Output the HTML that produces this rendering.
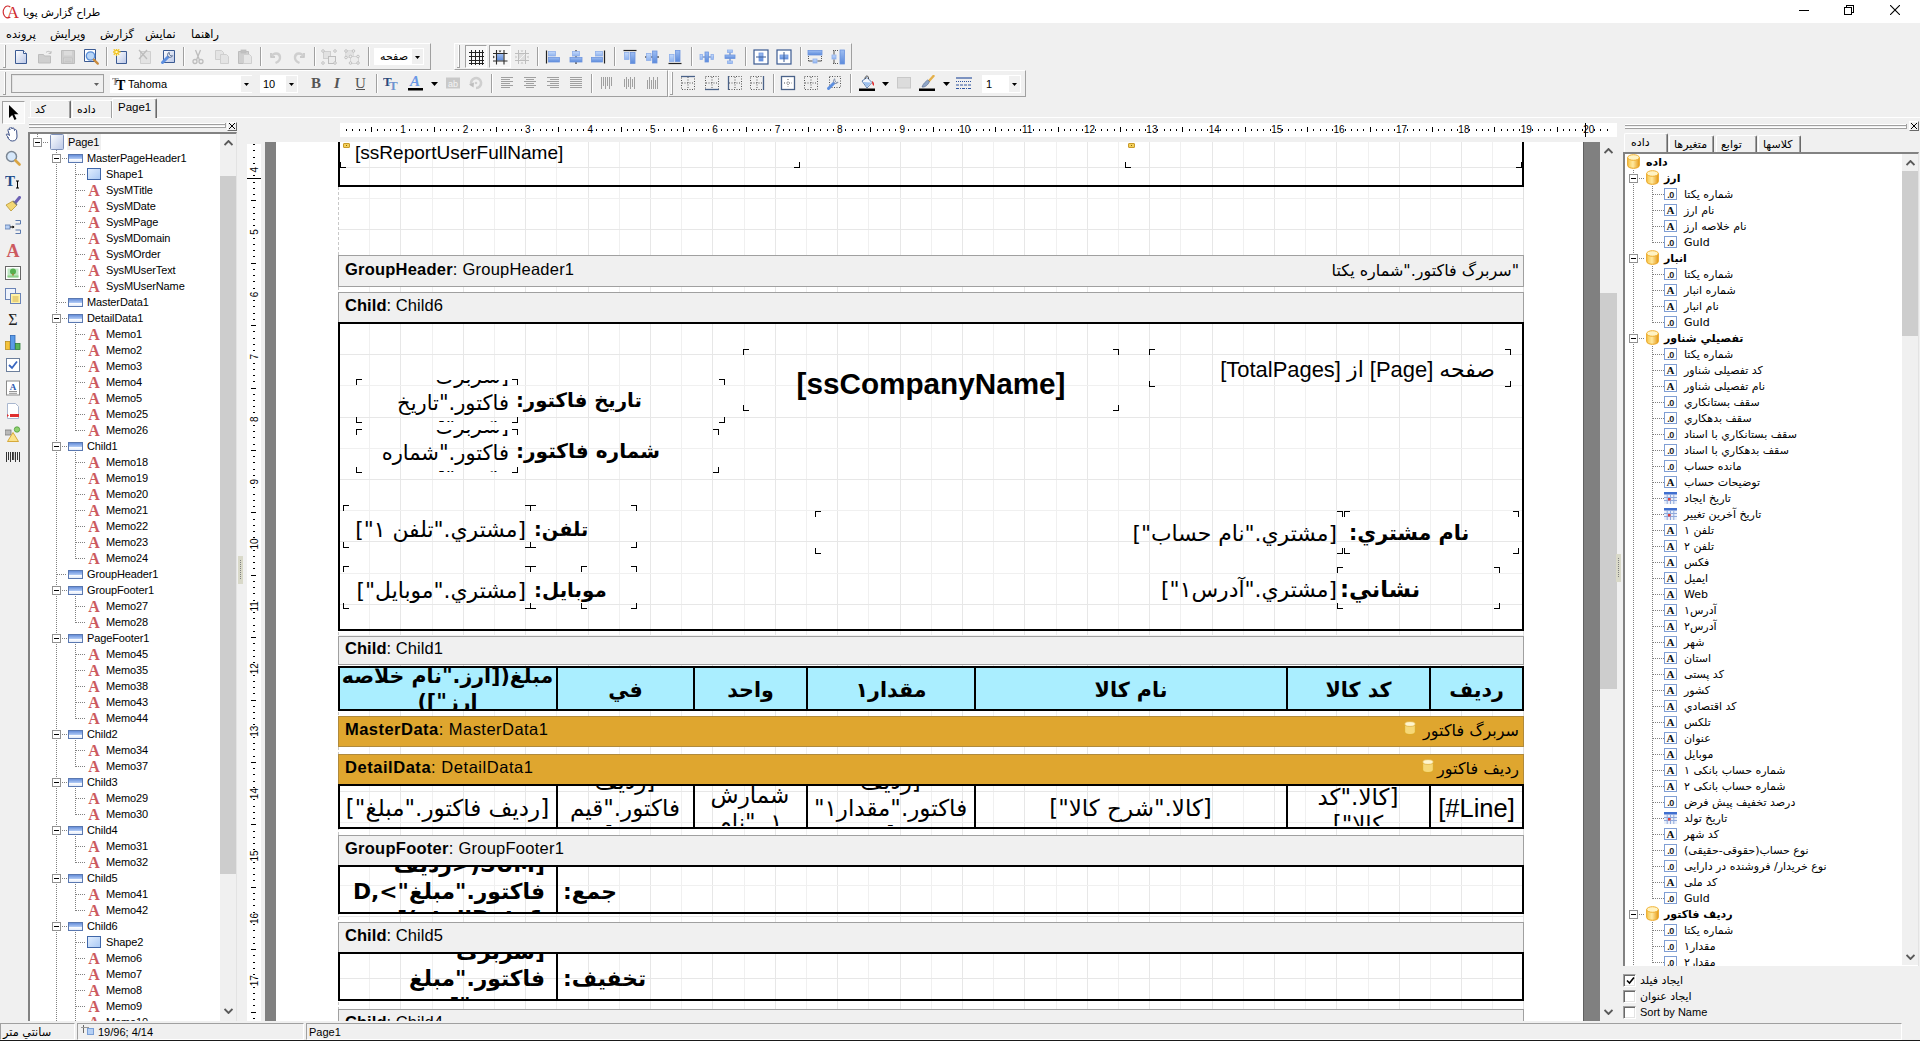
<!DOCTYPE html><html lang="fa"><head><meta charset="utf-8"><title>FastReport designer</title><style>
html,body{margin:0;padding:0}
body{width:1920px;height:1041px;position:relative;overflow:hidden;background:#f0f0f0;font-family:'Liberation Sans','DejaVu Sans',sans-serif;font-size:11px;color:#000}
div,svg,span{position:absolute;box-sizing:border-box}
span.i{position:static}
b{font-weight:bold}
.t{white-space:nowrap;line-height:1}
.ar{font-family:'DejaVu Sans','Liberation Sans',sans-serif}
.ti{white-space:nowrap;line-height:16px;height:16px;font-size:11px}
.dotv{width:1px;background-image:linear-gradient(#808080 50%,transparent 50%);background-size:1px 2px}
.doth{height:1px;background-image:linear-gradient(90deg,#808080 50%,transparent 50%);background-size:2px 1px}
.pm{width:9px;height:9px;border:1px solid #919191;background:#fff}
.pm:after{content:"";position:absolute;left:1px;top:3px;width:5px;height:1px;background:#000}
.bandh{background:#f0f0f0;border:1px solid #a0a0a0;font-size:16px;letter-spacing:.45px;line-height:1;white-space:nowrap}
.bandh.or{background:#dfa62f;border-color:#b08a3c}
.memo{overflow:hidden;white-space:nowrap}
.c{border:0 solid #000}
.c.tl{border-left-width:1px;border-top-width:1px}
.c.tr{border-right-width:1px;border-top-width:1px}
.c.bl{border-left-width:1px;border-bottom-width:1px}
.c.br{border-right-width:1px;border-bottom-width:1px}
</style></head><body>
<svg width="0" height="0" style="left:0;top:0"><defs><linearGradient id="gb" x1="0" y1="0" x2="1" y2="1"><stop offset="0" stop-color="#ffffff"/><stop offset="1" stop-color="#b9c6e6"/></linearGradient><linearGradient id="gl" x1="0" y1="0" x2="0" y2="1"><stop offset="0" stop-color="#c3d9fb"/><stop offset="1" stop-color="#8fb3ee"/></linearGradient><linearGradient id="gd" x1="0" y1="0" x2="0" y2="1"><stop offset="0" stop-color="#9dbdf2"/><stop offset="1" stop-color="#5c8bdb"/></linearGradient><linearGradient id="gy" x1="0" y1="0" x2="1" y2="0"><stop offset="0" stop-color="#f7c64a"/><stop offset=".45" stop-color="#ffe9a0"/><stop offset="1" stop-color="#e59a17"/></linearGradient><linearGradient id="gband" x1="0" y1="0" x2="0" y2="1"><stop offset="0" stop-color="#5c86d6"/><stop offset=".5" stop-color="#a9c4f2"/><stop offset=".55" stop-color="#ffffff"/><stop offset="1" stop-color="#dfe8f8"/></linearGradient><linearGradient id="gshape" x1="0" y1="0" x2="1" y2="1"><stop offset="0" stop-color="#e4f0ff"/><stop offset="1" stop-color="#a8c8f4"/></linearGradient></defs></svg>
<div style="left:261px;top:142px;width:1339px;height:879px;background:#f0f0f0"></div><div style="left:265px;top:142px;width:11px;height:879px;background:#808080"></div><div style="left:276px;top:142px;width:1307px;height:879px;background:#fff"></div><div style="left:1583px;top:142px;width:17px;height:879px;background:#808080;border-left:1px solid #606060"></div><svg style="left:338px;top:142px" width="1186" height="879" viewBox="0 0 1186 879"><rect x="31" y="0" width="1" height="879" fill="#f0f0f0"/><rect x="62" y="0" width="1" height="879" fill="#e7e7e7"/><rect x="94" y="0" width="1" height="879" fill="#f0f0f0"/><rect x="125" y="0" width="1" height="879" fill="#e7e7e7"/><rect x="156" y="0" width="1" height="879" fill="#f0f0f0"/><rect x="187" y="0" width="1" height="879" fill="#e7e7e7"/><rect x="218" y="0" width="1" height="879" fill="#f0f0f0"/><rect x="250" y="0" width="1" height="879" fill="#e7e7e7"/><rect x="281" y="0" width="1" height="879" fill="#f0f0f0"/><rect x="312" y="0" width="1" height="879" fill="#e7e7e7"/><rect x="343" y="0" width="1" height="879" fill="#f0f0f0"/><rect x="374" y="0" width="1" height="879" fill="#e7e7e7"/><rect x="406" y="0" width="1" height="879" fill="#f0f0f0"/><rect x="437" y="0" width="1" height="879" fill="#e7e7e7"/><rect x="468" y="0" width="1" height="879" fill="#f0f0f0"/><rect x="499" y="0" width="1" height="879" fill="#e7e7e7"/><rect x="530" y="0" width="1" height="879" fill="#f0f0f0"/><rect x="562" y="0" width="1" height="879" fill="#e7e7e7"/><rect x="593" y="0" width="1" height="879" fill="#f0f0f0"/><rect x="624" y="0" width="1" height="879" fill="#e7e7e7"/><rect x="655" y="0" width="1" height="879" fill="#f0f0f0"/><rect x="686" y="0" width="1" height="879" fill="#e7e7e7"/><rect x="718" y="0" width="1" height="879" fill="#f0f0f0"/><rect x="749" y="0" width="1" height="879" fill="#e7e7e7"/><rect x="780" y="0" width="1" height="879" fill="#f0f0f0"/><rect x="811" y="0" width="1" height="879" fill="#e7e7e7"/><rect x="842" y="0" width="1" height="879" fill="#f0f0f0"/><rect x="874" y="0" width="1" height="879" fill="#e7e7e7"/><rect x="905" y="0" width="1" height="879" fill="#f0f0f0"/><rect x="936" y="0" width="1" height="879" fill="#e7e7e7"/><rect x="967" y="0" width="1" height="879" fill="#f0f0f0"/><rect x="998" y="0" width="1" height="879" fill="#e7e7e7"/><rect x="1030" y="0" width="1" height="879" fill="#f0f0f0"/><rect x="1061" y="0" width="1" height="879" fill="#e7e7e7"/><rect x="1092" y="0" width="1" height="879" fill="#f0f0f0"/><rect x="1123" y="0" width="1" height="879" fill="#e7e7e7"/><rect x="1154" y="0" width="1" height="879" fill="#f0f0f0"/><rect x="0" y="25" width="1186" height="1" fill="#e7e7e7"/><rect x="0" y="56" width="1186" height="1" fill="#f0f0f0"/><rect x="0" y="87" width="1186" height="1" fill="#e7e7e7"/><rect x="0" y="119" width="1186" height="1" fill="#f0f0f0"/><rect x="0" y="150" width="1186" height="1" fill="#e7e7e7"/><rect x="0" y="181" width="1186" height="1" fill="#f0f0f0"/><rect x="0" y="212" width="1186" height="1" fill="#e7e7e7"/><rect x="0" y="243" width="1186" height="1" fill="#f0f0f0"/><rect x="0" y="275" width="1186" height="1" fill="#e7e7e7"/><rect x="0" y="306" width="1186" height="1" fill="#f0f0f0"/><rect x="0" y="337" width="1186" height="1" fill="#e7e7e7"/><rect x="0" y="368" width="1186" height="1" fill="#f0f0f0"/><rect x="0" y="399" width="1186" height="1" fill="#e7e7e7"/><rect x="0" y="431" width="1186" height="1" fill="#f0f0f0"/><rect x="0" y="462" width="1186" height="1" fill="#e7e7e7"/><rect x="0" y="493" width="1186" height="1" fill="#f0f0f0"/><rect x="0" y="524" width="1186" height="1" fill="#e7e7e7"/><rect x="0" y="555" width="1186" height="1" fill="#f0f0f0"/><rect x="0" y="587" width="1186" height="1" fill="#e7e7e7"/><rect x="0" y="618" width="1186" height="1" fill="#f0f0f0"/><rect x="0" y="649" width="1186" height="1" fill="#e7e7e7"/><rect x="0" y="680" width="1186" height="1" fill="#f0f0f0"/><rect x="0" y="711" width="1186" height="1" fill="#e7e7e7"/><rect x="0" y="743" width="1186" height="1" fill="#f0f0f0"/><rect x="0" y="774" width="1186" height="1" fill="#e7e7e7"/><rect x="0" y="805" width="1186" height="1" fill="#f0f0f0"/><rect x="0" y="836" width="1186" height="1" fill="#e7e7e7"/><rect x="0" y="867" width="1186" height="1" fill="#f0f0f0"/></svg><div style="left:338px;top:187px;width:1px;height:835px;background-image:linear-gradient(#c8c8c8 60%,transparent 60%);background-size:1px 5px"></div><div style="left:1523px;top:187px;width:1px;height:835px;background:#e0e0e0"></div><div style="left:338px;top:142px;width:1186px;height:45px;border:2px solid #000;border-top:0"></div><div style="left:343px;top:143px;width:7px;height:5px;background:#f3cf5a;border:1px solid #c89a2a;border-radius:1px"></div><div style="left:346px;top:145px;width:1px;height:1px;background:#8a6a10"></div><div style="left:1128px;top:143px;width:7px;height:5px;background:#f3cf5a;border:1px solid #c89a2a;border-radius:1px"></div><div style="left:1131px;top:145px;width:1px;height:1px;background:#8a6a10"></div><div class="c bl" style="left:340px;top:162px;width:6px;height:6px;"></div><div class="c br" style="left:794px;top:162px;width:6px;height:6px;"></div><div class="c bl" style="left:1125px;top:162px;width:6px;height:6px;"></div><div class="c br" style="left:1516px;top:162px;width:6px;height:6px;"></div><div class="t" style="left:355px;top:142px;font-size:19.05px;line-height:22px">[ssReportUserFullName]</div><div class="bandh" style="left:338px;top:255px;width:1186px;height:32px;"><div class="t" style="left:6px;top:5px;font-size:16.500px;letter-spacing:0.22px"><b>GroupHeader</b>: GroupHeader1</div><div class="t ar" style="direction:rtl;right:4px;top:6px;font-size:16px;letter-spacing:0;line-height:18px">"سربرگ فاكتور."شماره يكتا</div></div><div class="bandh" style="left:338px;top:292px;width:1186px;height:31px;"><div class="t" style="left:6px;top:4px;font-size:16.500px;letter-spacing:0.06px"><b>Child</b>: Child6</div></div><div style="left:338px;top:322px;width:1186px;height:309px;border:2px solid #000"></div><div class="c tl" style="left:743px;top:349px;width:6px;height:6px;"></div><div class="c tr" style="left:1113px;top:349px;width:6px;height:6px;"></div><div class="c bl" style="left:743px;top:405px;width:6px;height:6px;"></div><div class="c br" style="left:1113px;top:405px;width:6px;height:6px;"></div><div style="left:743px;top:353px;width:376px;height:62px;font-family:'Liberation Sans','DejaVu Sans',sans-serif;font-size:29.7px;line-height:62px;text-align:center;padding:0 0px;white-space:nowrap;overflow:hidden;font-weight:bold;">[ssCompanyName]</div><div class="c tl" style="left:1149px;top:349px;width:6px;height:6px;"></div><div class="c tr" style="left:1505px;top:349px;width:6px;height:6px;"></div><div class="c bl" style="left:1149px;top:381px;width:6px;height:6px;"></div><div class="c br" style="left:1505px;top:381px;width:6px;height:6px;"></div><div style="left:1149px;top:351px;width:362px;height:37px;font-family:'Liberation Sans','DejaVu Sans',sans-serif;font-size:21.95px;line-height:37px;text-align:right;padding:0 16px;white-space:nowrap;overflow:hidden;direction:rtl;">صفحه [Page] از [TotalPages]</div><div class="c tl" style="left:356px;top:379px;width:6px;height:6px;"></div><div class="c tr" style="left:512px;top:379px;width:6px;height:6px;"></div><div class="c bl" style="left:356px;top:417px;width:6px;height:6px;"></div><div class="c br" style="left:512px;top:417px;width:6px;height:6px;"></div><div class="c tr" style="left:719px;top:379px;width:6px;height:6px;"></div><div class="c br" style="left:719px;top:417px;width:6px;height:6px;"></div><div style="left:357px;top:380px;width:160px;height:42px;overflow:hidden"><div style="left:8px;top:-17.5px;width:144px;font-family:'DejaVu Sans','Liberation Sans',sans-serif;font-size:21px;line-height:27px;text-align:right;direction:rtl;white-space:nowrap;">[سربرگ<br>فاكتور."تاريخ<br>فاكتور"]</div></div><div style="left:514px;top:379px;width:211px;height:44px;font-family:'DejaVu Sans','Liberation Sans',sans-serif;font-size:19.71px;line-height:44px;text-align:left;padding:0 2px;white-space:nowrap;overflow:hidden;font-weight:bold;direction:rtl;">تاريخ فاكتور:</div><div class="c tl" style="left:356px;top:429px;width:6px;height:6px;"></div><div class="c tr" style="left:512px;top:429px;width:6px;height:6px;"></div><div class="c bl" style="left:356px;top:467px;width:6px;height:6px;"></div><div class="c br" style="left:512px;top:467px;width:6px;height:6px;"></div><div class="c tr" style="left:713px;top:429px;width:6px;height:6px;"></div><div class="c br" style="left:713px;top:467px;width:6px;height:6px;"></div><div style="left:357px;top:430px;width:160px;height:42px;overflow:hidden"><div style="left:8px;top:-17.5px;width:144px;font-family:'DejaVu Sans','Liberation Sans',sans-serif;font-size:21px;line-height:27px;text-align:right;direction:rtl;white-space:nowrap;">[سربرگ<br>فاكتور."شماره<br>فاكتور"]</div></div><div style="left:514px;top:429px;width:205px;height:44px;font-family:'DejaVu Sans','Liberation Sans',sans-serif;font-size:20.09px;line-height:44px;text-align:left;padding:0 2px;white-space:nowrap;overflow:hidden;font-weight:bold;direction:rtl;">شماره فاكتور:</div><div class="c tl" style="left:343px;top:505px;width:6px;height:6px;"></div><div class="c tr" style="left:525px;top:505px;width:6px;height:6px;"></div><div class="c bl" style="left:343px;top:542px;width:6px;height:6px;"></div><div class="c br" style="left:525px;top:542px;width:6px;height:6px;"></div><div class="c tl" style="left:530px;top:505px;width:6px;height:6px;"></div><div class="c tr" style="left:631px;top:505px;width:6px;height:6px;"></div><div class="c bl" style="left:530px;top:542px;width:6px;height:6px;"></div><div class="c br" style="left:631px;top:542px;width:6px;height:6px;"></div><div style="left:343px;top:508px;width:187px;height:43px;font-family:'DejaVu Sans','Liberation Sans',sans-serif;font-size:21.86px;line-height:43px;text-align:right;padding:0 4px;white-space:nowrap;overflow:hidden;direction:rtl;">[مشتري."تلفن ۱"]</div><div style="left:530px;top:508px;width:107px;height:43px;font-family:'DejaVu Sans','Liberation Sans',sans-serif;font-size:19.37px;line-height:43px;text-align:left;padding:0 4px;white-space:nowrap;overflow:hidden;font-weight:bold;direction:rtl;">تلفن:</div><div class="c tl" style="left:343px;top:566px;width:6px;height:6px;"></div><div class="c tr" style="left:525px;top:566px;width:6px;height:6px;"></div><div class="c bl" style="left:343px;top:603px;width:6px;height:6px;"></div><div class="c br" style="left:525px;top:603px;width:6px;height:6px;"></div><div class="c tl" style="left:530px;top:566px;width:6px;height:6px;"></div><div class="c tr" style="left:631px;top:566px;width:6px;height:6px;"></div><div class="c bl" style="left:530px;top:603px;width:6px;height:6px;"></div><div class="c br" style="left:631px;top:603px;width:6px;height:6px;"></div><div style="left:343px;top:569px;width:187px;height:43px;font-family:'DejaVu Sans','Liberation Sans',sans-serif;font-size:21.86px;line-height:43px;text-align:right;padding:0 4px;white-space:nowrap;overflow:hidden;direction:rtl;">[مشتري."موبايل"]</div><div style="left:530px;top:569px;width:107px;height:43px;font-family:'DejaVu Sans','Liberation Sans',sans-serif;font-size:19.84px;line-height:43px;text-align:left;padding:0 4px;white-space:nowrap;overflow:hidden;font-weight:bold;direction:rtl;">موبايل:</div><div class="c tl" style="left:581px;top:566px;width:6px;height:6px;"></div><div class="c bl" style="left:581px;top:603px;width:6px;height:6px;"></div><div class="c tl" style="left:815px;top:511px;width:6px;height:6px;"></div><div class="c bl" style="left:815px;top:548px;width:6px;height:6px;"></div><div class="c tr" style="left:1337px;top:511px;width:6px;height:6px;"></div><div class="c br" style="left:1337px;top:548px;width:6px;height:6px;"></div><div class="c tl" style="left:1344px;top:511px;width:6px;height:6px;"></div><div class="c tr" style="left:1513px;top:511px;width:6px;height:6px;"></div><div class="c bl" style="left:1344px;top:548px;width:6px;height:6px;"></div><div class="c br" style="left:1513px;top:548px;width:6px;height:6px;"></div><div style="left:815px;top:512px;width:526px;height:43px;font-family:'DejaVu Sans','Liberation Sans',sans-serif;font-size:21.86px;line-height:43px;text-align:right;padding:0 4px;white-space:nowrap;overflow:hidden;direction:rtl;">[مشتري."نام حساب"]</div><div style="left:1343px;top:512px;width:176px;height:43px;font-family:'DejaVu Sans','Liberation Sans',sans-serif;font-size:20.7px;line-height:43px;text-align:left;padding:0 6px;white-space:nowrap;overflow:hidden;font-weight:bold;direction:rtl;">نام مشتري:</div><div class="c tl" style="left:1337px;top:567px;width:6px;height:6px;"></div><div class="c tr" style="left:1494px;top:567px;width:6px;height:6px;"></div><div class="c bl" style="left:1337px;top:603px;width:6px;height:6px;"></div><div class="c br" style="left:1494px;top:603px;width:6px;height:6px;"></div><div class="c tl" style="left:1337px;top:567px;width:6px;height:6px;"></div><div class="c bl" style="left:1337px;top:603px;width:6px;height:6px;"></div><div style="left:900px;top:568px;width:437px;height:43px;font-family:'DejaVu Sans','Liberation Sans',sans-serif;font-size:21.86px;line-height:43px;text-align:right;padding:0 0px;white-space:nowrap;overflow:hidden;direction:rtl;">[مشتري."آدرس۱"]</div><div style="left:1337px;top:568px;width:163px;height:43px;font-family:'DejaVu Sans','Liberation Sans',sans-serif;font-size:22.58px;line-height:43px;text-align:left;padding:0 3px;white-space:nowrap;overflow:hidden;font-weight:bold;direction:rtl;">نشاني:</div><div class="bandh" style="left:338px;top:636px;width:1186px;height:29px;"><div class="t" style="left:6px;top:3px;font-size:16.500px;letter-spacing:0.06px"><b>Child</b>: Child1</div></div><div style="left:338px;top:666px;width:220px;height:45px;background:#aaeeff;border:2px solid #000"></div><div style="left:556px;top:666px;width:139px;height:45px;background:#aaeeff;border:2px solid #000"></div><div style="left:556px;top:668px;width:139px;height:45px;font-family:'DejaVu Sans','Liberation Sans',sans-serif;font-size:20.6px;line-height:45px;text-align:center;padding:0 0px;white-space:nowrap;overflow:hidden;font-weight:bold;direction:rtl;">في</div><div style="left:693px;top:666px;width:115px;height:45px;background:#aaeeff;border:2px solid #000"></div><div style="left:693px;top:668px;width:115px;height:45px;font-family:'DejaVu Sans','Liberation Sans',sans-serif;font-size:20.6px;line-height:45px;text-align:center;padding:0 0px;white-space:nowrap;overflow:hidden;font-weight:bold;direction:rtl;">واحد</div><div style="left:806px;top:666px;width:170px;height:45px;background:#aaeeff;border:2px solid #000"></div><div style="left:806px;top:668px;width:170px;height:45px;font-family:'DejaVu Sans','Liberation Sans',sans-serif;font-size:20.6px;line-height:45px;text-align:center;padding:0 0px;white-space:nowrap;overflow:hidden;font-weight:bold;direction:rtl;">مقدار۱</div><div style="left:974px;top:666px;width:314px;height:45px;background:#aaeeff;border:2px solid #000"></div><div style="left:974px;top:668px;width:314px;height:45px;font-family:'DejaVu Sans','Liberation Sans',sans-serif;font-size:20.6px;line-height:45px;text-align:center;padding:0 0px;white-space:nowrap;overflow:hidden;font-weight:bold;direction:rtl;">نام كالا</div><div style="left:1286px;top:666px;width:145px;height:45px;background:#aaeeff;border:2px solid #000"></div><div style="left:1286px;top:668px;width:145px;height:45px;font-family:'DejaVu Sans','Liberation Sans',sans-serif;font-size:20.6px;line-height:45px;text-align:center;padding:0 0px;white-space:nowrap;overflow:hidden;font-weight:bold;direction:rtl;">كد كالا</div><div style="left:1429px;top:666px;width:95px;height:45px;background:#aaeeff;border:2px solid #000"></div><div style="left:1429px;top:668px;width:95px;height:45px;font-family:'DejaVu Sans','Liberation Sans',sans-serif;font-size:20.6px;line-height:45px;text-align:center;padding:0 0px;white-space:nowrap;overflow:hidden;font-weight:bold;direction:rtl;">رديف</div><div style="left:340px;top:668px;width:215px;height:41px;overflow:hidden"><div style="left:0px;top:-5.5px;width:215px;font-family:'DejaVu Sans','Liberation Sans',sans-serif;font-size:20.5px;line-height:26px;text-align:center;direction:rtl;white-space:nowrap;font-weight:bold;">مبلغ([ارز."نام خلاصه<br>ارز"])</div></div><div class="bandh or" style="left:338px;top:716px;width:1186px;height:31px;"><div class="t" style="left:6px;top:4px;font-size:16.500px;letter-spacing:0.47px"><b>MasterData</b>: MasterData1</div><div class="t ar" style="direction:rtl;right:4px;top:5px;font-size:16px;letter-spacing:0;line-height:18px">سربرگ فاكتور</div><svg style="left:1065px;top:4px" width="12" height="14" viewBox="0 0 12 14"><path d="M.7 3v8c0 1.500 2.400 2.500 5.300 2.500s5.300-1 5.300-2.500v-8z" fill="#f6d878" stroke="#d9a520" stroke-width=".8"/><ellipse cx="6" cy="3" rx="5.300" ry="2.400" fill="#fff6d0" stroke="#e0b040" stroke-width=".8"/></svg></div><div class="bandh or" style="left:338px;top:754px;width:1186px;height:31px;"><div class="t" style="left:6px;top:4px;font-size:16.500px;letter-spacing:0.54px"><b>DetailData</b>: DetailData1</div><div class="t ar" style="direction:rtl;right:4px;top:5px;font-size:16px;letter-spacing:0;line-height:18px">رديف فاكتور</div><svg style="left:1083px;top:4px" width="12" height="14" viewBox="0 0 12 14"><path d="M.7 3v8c0 1.500 2.400 2.500 5.300 2.500s5.300-1 5.300-2.500v-8z" fill="#f6d878" stroke="#d9a520" stroke-width=".8"/><ellipse cx="6" cy="3" rx="5.300" ry="2.400" fill="#fff6d0" stroke="#e0b040" stroke-width=".8"/></svg></div><div style="left:338px;top:784px;width:220px;height:45px;border:2px solid #000"></div><div style="left:556px;top:784px;width:139px;height:45px;border:2px solid #000"></div><div style="left:693px;top:784px;width:115px;height:45px;border:2px solid #000"></div><div style="left:806px;top:784px;width:170px;height:45px;border:2px solid #000"></div><div style="left:974px;top:784px;width:314px;height:45px;border:2px solid #000"></div><div style="left:1286px;top:784px;width:145px;height:45px;border:2px solid #000"></div><div style="left:1429px;top:784px;width:95px;height:45px;border:2px solid #000"></div><div style="left:340px;top:788px;width:215px;height:40px;font-family:'DejaVu Sans','Liberation Sans',sans-serif;font-size:23px;line-height:40px;text-align:center;padding:0 0px;white-space:nowrap;overflow:hidden;direction:rtl;">[رديف فاكتور."مبلغ"]</div><div style="left:558px;top:786px;width:134px;height:40px;overflow:hidden"><div style="left:0px;top:-18.5px;width:134px;font-family:'DejaVu Sans','Liberation Sans',sans-serif;font-size:23px;line-height:27px;text-align:center;direction:rtl;white-space:nowrap;">[رديف<br>فاكتور."قيم<br>ت"]</div></div><div style="left:695px;top:786px;width:110px;height:40px;overflow:hidden"><div style="left:0px;top:-31.5px;width:110px;font-family:'DejaVu Sans','Liberation Sans',sans-serif;font-size:23px;line-height:27px;text-align:center;direction:rtl;white-space:nowrap;">[واحد<br>شمارش<br>۱ ."نام<br>واحد"]</div></div><div style="left:808px;top:786px;width:165px;height:40px;overflow:hidden"><div style="left:0px;top:-18.5px;width:165px;font-family:'DejaVu Sans','Liberation Sans',sans-serif;font-size:23px;line-height:27px;text-align:center;direction:rtl;white-space:nowrap;">[رديف<br>فاكتور."مقدار۱"<br>]</div></div><div style="left:976px;top:788px;width:309px;height:40px;font-family:'DejaVu Sans','Liberation Sans',sans-serif;font-size:23px;line-height:40px;text-align:center;padding:0 0px;white-space:nowrap;overflow:hidden;direction:rtl;">[كالا."شرح كالا"]</div><div style="left:1288px;top:786px;width:140px;height:40px;overflow:hidden"><div style="left:0px;top:-2.5px;width:140px;font-family:'DejaVu Sans','Liberation Sans',sans-serif;font-size:23px;line-height:27px;text-align:center;direction:rtl;white-space:nowrap;">[كالا."كد<br>كالا"]</div></div><div style="left:1431px;top:788px;width:91px;height:40px;font-family:'Liberation Sans','DejaVu Sans',sans-serif;font-size:25.5px;line-height:40px;text-align:center;padding:0 0px;white-space:nowrap;overflow:hidden;">[#Line]</div><div class="bandh" style="left:338px;top:835px;width:1186px;height:31px;"><div class="t" style="left:6px;top:4px;font-size:16.500px;letter-spacing:0.26px"><b>GroupFooter</b>: GroupFooter1</div></div><div style="left:338px;top:865px;width:220px;height:49px;border:2px solid #000"></div><div style="left:556px;top:865px;width:968px;height:49px;border:2px solid #000"></div><div style="left:340px;top:867px;width:215px;height:45px;overflow:hidden"><div style="left:10px;top:-16.0px;width:195px;font-family:'DejaVu Sans','Liberation Sans',sans-serif;font-size:21.8px;line-height:27px;text-align:right;direction:rtl;white-space:nowrap;font-weight:bold;">[SUM(&lt;رديف<br>فاكتور."مبلغ"&gt;,D<br>etailData1)]</div></div><div style="left:558px;top:869px;width:200px;height:45px;font-family:'DejaVu Sans','Liberation Sans',sans-serif;font-size:21.8px;line-height:45px;text-align:left;padding:0 5px;white-space:nowrap;overflow:hidden;font-weight:bold;direction:rtl;">جمع:</div><div class="bandh" style="left:338px;top:922px;width:1186px;height:31px;"><div class="t" style="left:6px;top:4px;font-size:16.500px;letter-spacing:0.06px"><b>Child</b>: Child5</div></div><div style="left:338px;top:952px;width:220px;height:49px;border:2px solid #000"></div><div style="left:556px;top:952px;width:968px;height:49px;border:2px solid #000"></div><div style="left:340px;top:954px;width:215px;height:45px;overflow:hidden"><div style="left:10px;top:-16.0px;width:195px;font-family:'DejaVu Sans','Liberation Sans',sans-serif;font-size:21.8px;line-height:27px;text-align:right;direction:rtl;white-space:nowrap;font-weight:bold;">[سربرگ<br>فاكتور."مبلغ<br>تخفيف"]</div></div><div style="left:558px;top:956px;width:200px;height:45px;font-family:'DejaVu Sans','Liberation Sans',sans-serif;font-size:21.8px;line-height:45px;text-align:left;padding:0 5px;white-space:nowrap;overflow:hidden;font-weight:bold;direction:rtl;">تخفيف:</div><div class="bandh" style="left:338px;top:1009px;width:1186px;height:31px;"><div class="t" style="left:6px;top:4px;font-size:16.500px;letter-spacing:0.06px"><b>Child</b>: Child4</div></div><div style="left:1600px;top:142px;width:17px;height:879px;background:#f0f0f0"></div><div style="left:1600px;top:293px;width:17px;height:396px;background:#cdcdcd"></div><svg style="left:1604px;top:148px" width="9" height="6" viewBox="0 0 9 6"><path d="M.5 5l4-4 4 4" fill="none" stroke="#5a5a5a" stroke-width="1.900"/></svg><svg style="left:1604px;top:1009px" width="9" height="6" viewBox="0 0 9 6"><path d="M.5 1l4 4 4-4" fill="none" stroke="#5a5a5a" stroke-width="1.900"/></svg><div style="left:0px;top:1021px;width:1920px;height:20px;background:#f0f0f0"></div>
<div style="left:340px;top:123px;width:1277px;height:14px;background:#fff"></div><svg style="left:340px;top:123px" width="1277" height="14" viewBox="0 0 1277 14"><rect x="6" y="6" width="1" height="2" fill="#000"/><rect x="12" y="6" width="1" height="2" fill="#000"/><rect x="19" y="6" width="1" height="2" fill="#000"/><rect x="25" y="6" width="1" height="2" fill="#000"/><rect x="31" y="4" width="1" height="5" fill="#000"/><rect x="37" y="6" width="1" height="2" fill="#000"/><rect x="44" y="6" width="1" height="2" fill="#000"/><rect x="50" y="6" width="1" height="2" fill="#000"/><rect x="56" y="6" width="1" height="2" fill="#000"/><rect x="69" y="6" width="1" height="2" fill="#000"/><rect x="75" y="6" width="1" height="2" fill="#000"/><rect x="81" y="6" width="1" height="2" fill="#000"/><rect x="87" y="6" width="1" height="2" fill="#000"/><rect x="94" y="4" width="1" height="5" fill="#000"/><rect x="100" y="6" width="1" height="2" fill="#000"/><rect x="106" y="6" width="1" height="2" fill="#000"/><rect x="112" y="6" width="1" height="2" fill="#000"/><rect x="118" y="6" width="1" height="2" fill="#000"/><rect x="131" y="6" width="1" height="2" fill="#000"/><rect x="137" y="6" width="1" height="2" fill="#000"/><rect x="143" y="6" width="1" height="2" fill="#000"/><rect x="150" y="6" width="1" height="2" fill="#000"/><rect x="156" y="4" width="1" height="5" fill="#000"/><rect x="162" y="6" width="1" height="2" fill="#000"/><rect x="168" y="6" width="1" height="2" fill="#000"/><rect x="175" y="6" width="1" height="2" fill="#000"/><rect x="181" y="6" width="1" height="2" fill="#000"/><rect x="193" y="6" width="1" height="2" fill="#000"/><rect x="200" y="6" width="1" height="2" fill="#000"/><rect x="206" y="6" width="1" height="2" fill="#000"/><rect x="212" y="6" width="1" height="2" fill="#000"/><rect x="218" y="4" width="1" height="5" fill="#000"/><rect x="225" y="6" width="1" height="2" fill="#000"/><rect x="231" y="6" width="1" height="2" fill="#000"/><rect x="237" y="6" width="1" height="2" fill="#000"/><rect x="243" y="6" width="1" height="2" fill="#000"/><rect x="256" y="6" width="1" height="2" fill="#000"/><rect x="262" y="6" width="1" height="2" fill="#000"/><rect x="268" y="6" width="1" height="2" fill="#000"/><rect x="274" y="6" width="1" height="2" fill="#000"/><rect x="281" y="4" width="1" height="5" fill="#000"/><rect x="287" y="6" width="1" height="2" fill="#000"/><rect x="293" y="6" width="1" height="2" fill="#000"/><rect x="299" y="6" width="1" height="2" fill="#000"/><rect x="306" y="6" width="1" height="2" fill="#000"/><rect x="318" y="6" width="1" height="2" fill="#000"/><rect x="324" y="6" width="1" height="2" fill="#000"/><rect x="331" y="6" width="1" height="2" fill="#000"/><rect x="337" y="6" width="1" height="2" fill="#000"/><rect x="343" y="4" width="1" height="5" fill="#000"/><rect x="349" y="6" width="1" height="2" fill="#000"/><rect x="356" y="6" width="1" height="2" fill="#000"/><rect x="362" y="6" width="1" height="2" fill="#000"/><rect x="368" y="6" width="1" height="2" fill="#000"/><rect x="381" y="6" width="1" height="2" fill="#000"/><rect x="387" y="6" width="1" height="2" fill="#000"/><rect x="393" y="6" width="1" height="2" fill="#000"/><rect x="399" y="6" width="1" height="2" fill="#000"/><rect x="406" y="4" width="1" height="5" fill="#000"/><rect x="412" y="6" width="1" height="2" fill="#000"/><rect x="418" y="6" width="1" height="2" fill="#000"/><rect x="424" y="6" width="1" height="2" fill="#000"/><rect x="430" y="6" width="1" height="2" fill="#000"/><rect x="443" y="6" width="1" height="2" fill="#000"/><rect x="449" y="6" width="1" height="2" fill="#000"/><rect x="455" y="6" width="1" height="2" fill="#000"/><rect x="462" y="6" width="1" height="2" fill="#000"/><rect x="468" y="4" width="1" height="5" fill="#000"/><rect x="474" y="6" width="1" height="2" fill="#000"/><rect x="480" y="6" width="1" height="2" fill="#000"/><rect x="487" y="6" width="1" height="2" fill="#000"/><rect x="493" y="6" width="1" height="2" fill="#000"/><rect x="505" y="6" width="1" height="2" fill="#000"/><rect x="512" y="6" width="1" height="2" fill="#000"/><rect x="518" y="6" width="1" height="2" fill="#000"/><rect x="524" y="6" width="1" height="2" fill="#000"/><rect x="530" y="4" width="1" height="5" fill="#000"/><rect x="537" y="6" width="1" height="2" fill="#000"/><rect x="543" y="6" width="1" height="2" fill="#000"/><rect x="549" y="6" width="1" height="2" fill="#000"/><rect x="555" y="6" width="1" height="2" fill="#000"/><rect x="568" y="6" width="1" height="2" fill="#000"/><rect x="574" y="6" width="1" height="2" fill="#000"/><rect x="580" y="6" width="1" height="2" fill="#000"/><rect x="586" y="6" width="1" height="2" fill="#000"/><rect x="593" y="4" width="1" height="5" fill="#000"/><rect x="599" y="6" width="1" height="2" fill="#000"/><rect x="605" y="6" width="1" height="2" fill="#000"/><rect x="611" y="6" width="1" height="2" fill="#000"/><rect x="618" y="6" width="1" height="2" fill="#000"/><rect x="630" y="6" width="1" height="2" fill="#000"/><rect x="636" y="6" width="1" height="2" fill="#000"/><rect x="643" y="6" width="1" height="2" fill="#000"/><rect x="649" y="6" width="1" height="2" fill="#000"/><rect x="655" y="4" width="1" height="5" fill="#000"/><rect x="661" y="6" width="1" height="2" fill="#000"/><rect x="668" y="6" width="1" height="2" fill="#000"/><rect x="674" y="6" width="1" height="2" fill="#000"/><rect x="680" y="6" width="1" height="2" fill="#000"/><rect x="693" y="6" width="1" height="2" fill="#000"/><rect x="699" y="6" width="1" height="2" fill="#000"/><rect x="705" y="6" width="1" height="2" fill="#000"/><rect x="711" y="6" width="1" height="2" fill="#000"/><rect x="718" y="4" width="1" height="5" fill="#000"/><rect x="724" y="6" width="1" height="2" fill="#000"/><rect x="730" y="6" width="1" height="2" fill="#000"/><rect x="736" y="6" width="1" height="2" fill="#000"/><rect x="742" y="6" width="1" height="2" fill="#000"/><rect x="755" y="6" width="1" height="2" fill="#000"/><rect x="761" y="6" width="1" height="2" fill="#000"/><rect x="767" y="6" width="1" height="2" fill="#000"/><rect x="774" y="6" width="1" height="2" fill="#000"/><rect x="780" y="4" width="1" height="5" fill="#000"/><rect x="786" y="6" width="1" height="2" fill="#000"/><rect x="792" y="6" width="1" height="2" fill="#000"/><rect x="799" y="6" width="1" height="2" fill="#000"/><rect x="805" y="6" width="1" height="2" fill="#000"/><rect x="817" y="6" width="1" height="2" fill="#000"/><rect x="824" y="6" width="1" height="2" fill="#000"/><rect x="830" y="6" width="1" height="2" fill="#000"/><rect x="836" y="6" width="1" height="2" fill="#000"/><rect x="842" y="4" width="1" height="5" fill="#000"/><rect x="849" y="6" width="1" height="2" fill="#000"/><rect x="855" y="6" width="1" height="2" fill="#000"/><rect x="861" y="6" width="1" height="2" fill="#000"/><rect x="867" y="6" width="1" height="2" fill="#000"/><rect x="880" y="6" width="1" height="2" fill="#000"/><rect x="886" y="6" width="1" height="2" fill="#000"/><rect x="892" y="6" width="1" height="2" fill="#000"/><rect x="898" y="6" width="1" height="2" fill="#000"/><rect x="905" y="4" width="1" height="5" fill="#000"/><rect x="911" y="6" width="1" height="2" fill="#000"/><rect x="917" y="6" width="1" height="2" fill="#000"/><rect x="923" y="6" width="1" height="2" fill="#000"/><rect x="930" y="6" width="1" height="2" fill="#000"/><rect x="942" y="6" width="1" height="2" fill="#000"/><rect x="948" y="6" width="1" height="2" fill="#000"/><rect x="955" y="6" width="1" height="2" fill="#000"/><rect x="961" y="6" width="1" height="2" fill="#000"/><rect x="967" y="4" width="1" height="5" fill="#000"/><rect x="973" y="6" width="1" height="2" fill="#000"/><rect x="980" y="6" width="1" height="2" fill="#000"/><rect x="986" y="6" width="1" height="2" fill="#000"/><rect x="992" y="6" width="1" height="2" fill="#000"/><rect x="1005" y="6" width="1" height="2" fill="#000"/><rect x="1011" y="6" width="1" height="2" fill="#000"/><rect x="1017" y="6" width="1" height="2" fill="#000"/><rect x="1023" y="6" width="1" height="2" fill="#000"/><rect x="1030" y="4" width="1" height="5" fill="#000"/><rect x="1036" y="6" width="1" height="2" fill="#000"/><rect x="1042" y="6" width="1" height="2" fill="#000"/><rect x="1048" y="6" width="1" height="2" fill="#000"/><rect x="1054" y="6" width="1" height="2" fill="#000"/><rect x="1067" y="6" width="1" height="2" fill="#000"/><rect x="1073" y="6" width="1" height="2" fill="#000"/><rect x="1079" y="6" width="1" height="2" fill="#000"/><rect x="1086" y="6" width="1" height="2" fill="#000"/><rect x="1092" y="4" width="1" height="5" fill="#000"/><rect x="1098" y="6" width="1" height="2" fill="#000"/><rect x="1104" y="6" width="1" height="2" fill="#000"/><rect x="1111" y="6" width="1" height="2" fill="#000"/><rect x="1117" y="6" width="1" height="2" fill="#000"/><rect x="1129" y="6" width="1" height="2" fill="#000"/><rect x="1136" y="6" width="1" height="2" fill="#000"/><rect x="1142" y="6" width="1" height="2" fill="#000"/><rect x="1148" y="6" width="1" height="2" fill="#000"/><rect x="1154" y="4" width="1" height="5" fill="#000"/><rect x="1161" y="6" width="1" height="2" fill="#000"/><rect x="1167" y="6" width="1" height="2" fill="#000"/><rect x="1173" y="6" width="1" height="2" fill="#000"/><rect x="1179" y="6" width="1" height="2" fill="#000"/><rect x="1192" y="6" width="1" height="2" fill="#000"/><rect x="1198" y="6" width="1" height="2" fill="#000"/><rect x="1204" y="6" width="1" height="2" fill="#000"/><rect x="1210" y="6" width="1" height="2" fill="#000"/><rect x="1217" y="4" width="1" height="5" fill="#000"/><rect x="1223" y="6" width="1" height="2" fill="#000"/><rect x="1229" y="6" width="1" height="2" fill="#000"/><rect x="1235" y="6" width="1" height="2" fill="#000"/><rect x="1242" y="6" width="1" height="2" fill="#000"/><rect x="1254" y="6" width="1" height="2" fill="#000"/><rect x="1260" y="6" width="1" height="2" fill="#000"/><rect x="1267" y="6" width="1" height="2" fill="#000"/><text x="63.1" y="10" text-anchor="middle" font-size="10" font-family="Liberation Sans,sans-serif" fill="#000">1</text><text x="125.5" y="10" text-anchor="middle" font-size="10" font-family="Liberation Sans,sans-serif" fill="#000">2</text><text x="187.9" y="10" text-anchor="middle" font-size="10" font-family="Liberation Sans,sans-serif" fill="#000">3</text><text x="250.3" y="10" text-anchor="middle" font-size="10" font-family="Liberation Sans,sans-serif" fill="#000">4</text><text x="312.7" y="10" text-anchor="middle" font-size="10" font-family="Liberation Sans,sans-serif" fill="#000">5</text><text x="375.1" y="10" text-anchor="middle" font-size="10" font-family="Liberation Sans,sans-serif" fill="#000">6</text><text x="437.5" y="10" text-anchor="middle" font-size="10" font-family="Liberation Sans,sans-serif" fill="#000">7</text><text x="499.9" y="10" text-anchor="middle" font-size="10" font-family="Liberation Sans,sans-serif" fill="#000">8</text><text x="562.3" y="10" text-anchor="middle" font-size="10" font-family="Liberation Sans,sans-serif" fill="#000">9</text><text x="624.7" y="10" text-anchor="middle" font-size="10" font-family="Liberation Sans,sans-serif" fill="#000">10</text><text x="687.1" y="10" text-anchor="middle" font-size="10" font-family="Liberation Sans,sans-serif" fill="#000">11</text><text x="749.5" y="10" text-anchor="middle" font-size="10" font-family="Liberation Sans,sans-serif" fill="#000">12</text><text x="811.9" y="10" text-anchor="middle" font-size="10" font-family="Liberation Sans,sans-serif" fill="#000">13</text><text x="874.3" y="10" text-anchor="middle" font-size="10" font-family="Liberation Sans,sans-serif" fill="#000">14</text><text x="936.7" y="10" text-anchor="middle" font-size="10" font-family="Liberation Sans,sans-serif" fill="#000">15</text><text x="999.1" y="10" text-anchor="middle" font-size="10" font-family="Liberation Sans,sans-serif" fill="#000">16</text><text x="1061.5" y="10" text-anchor="middle" font-size="10" font-family="Liberation Sans,sans-serif" fill="#000">17</text><text x="1123.9" y="10" text-anchor="middle" font-size="10" font-family="Liberation Sans,sans-serif" fill="#000">18</text><text x="1186.3" y="10" text-anchor="middle" font-size="10" font-family="Liberation Sans,sans-serif" fill="#000">19</text><text x="1248.7" y="10" text-anchor="middle" font-size="10" font-family="Liberation Sans,sans-serif" fill="#000">20</text><rect x="1245" y="0" width="1" height="14" fill="#000"/></svg><div style="left:247px;top:144px;width:14px;height:877px;background:#fff"></div><svg style="left:247px;top:142px" width="14" height="879" viewBox="0 0 14 879"><rect x="6" y="2" width="2" height="1" fill="#000"/><rect x="6" y="8" width="2" height="1" fill="#000"/><rect x="6" y="15" width="2" height="1" fill="#000"/><rect x="6" y="21" width="2" height="1" fill="#000"/><rect x="6" y="33" width="2" height="1" fill="#000"/><rect x="6" y="40" width="2" height="1" fill="#000"/><rect x="6" y="46" width="2" height="1" fill="#000"/><rect x="6" y="52" width="2" height="1" fill="#000"/><rect x="4" y="58" width="5" height="1" fill="#000"/><rect x="6" y="65" width="2" height="1" fill="#000"/><rect x="6" y="71" width="2" height="1" fill="#000"/><rect x="6" y="77" width="2" height="1" fill="#000"/><rect x="6" y="83" width="2" height="1" fill="#000"/><rect x="6" y="96" width="2" height="1" fill="#000"/><rect x="6" y="102" width="2" height="1" fill="#000"/><rect x="6" y="108" width="2" height="1" fill="#000"/><rect x="6" y="114" width="2" height="1" fill="#000"/><rect x="4" y="121" width="5" height="1" fill="#000"/><rect x="6" y="127" width="2" height="1" fill="#000"/><rect x="6" y="133" width="2" height="1" fill="#000"/><rect x="6" y="139" width="2" height="1" fill="#000"/><rect x="6" y="146" width="2" height="1" fill="#000"/><rect x="6" y="158" width="2" height="1" fill="#000"/><rect x="6" y="164" width="2" height="1" fill="#000"/><rect x="6" y="171" width="2" height="1" fill="#000"/><rect x="6" y="177" width="2" height="1" fill="#000"/><rect x="4" y="183" width="5" height="1" fill="#000"/><rect x="6" y="189" width="2" height="1" fill="#000"/><rect x="6" y="196" width="2" height="1" fill="#000"/><rect x="6" y="202" width="2" height="1" fill="#000"/><rect x="6" y="208" width="2" height="1" fill="#000"/><rect x="6" y="221" width="2" height="1" fill="#000"/><rect x="6" y="227" width="2" height="1" fill="#000"/><rect x="6" y="233" width="2" height="1" fill="#000"/><rect x="6" y="239" width="2" height="1" fill="#000"/><rect x="4" y="246" width="5" height="1" fill="#000"/><rect x="6" y="252" width="2" height="1" fill="#000"/><rect x="6" y="258" width="2" height="1" fill="#000"/><rect x="6" y="264" width="2" height="1" fill="#000"/><rect x="6" y="270" width="2" height="1" fill="#000"/><rect x="6" y="283" width="2" height="1" fill="#000"/><rect x="6" y="289" width="2" height="1" fill="#000"/><rect x="6" y="295" width="2" height="1" fill="#000"/><rect x="6" y="302" width="2" height="1" fill="#000"/><rect x="4" y="308" width="5" height="1" fill="#000"/><rect x="6" y="314" width="2" height="1" fill="#000"/><rect x="6" y="320" width="2" height="1" fill="#000"/><rect x="6" y="327" width="2" height="1" fill="#000"/><rect x="6" y="333" width="2" height="1" fill="#000"/><rect x="6" y="345" width="2" height="1" fill="#000"/><rect x="6" y="352" width="2" height="1" fill="#000"/><rect x="6" y="358" width="2" height="1" fill="#000"/><rect x="6" y="364" width="2" height="1" fill="#000"/><rect x="4" y="370" width="5" height="1" fill="#000"/><rect x="6" y="377" width="2" height="1" fill="#000"/><rect x="6" y="383" width="2" height="1" fill="#000"/><rect x="6" y="389" width="2" height="1" fill="#000"/><rect x="6" y="395" width="2" height="1" fill="#000"/><rect x="6" y="408" width="2" height="1" fill="#000"/><rect x="6" y="414" width="2" height="1" fill="#000"/><rect x="6" y="420" width="2" height="1" fill="#000"/><rect x="6" y="426" width="2" height="1" fill="#000"/><rect x="4" y="433" width="5" height="1" fill="#000"/><rect x="6" y="439" width="2" height="1" fill="#000"/><rect x="6" y="445" width="2" height="1" fill="#000"/><rect x="6" y="451" width="2" height="1" fill="#000"/><rect x="6" y="458" width="2" height="1" fill="#000"/><rect x="6" y="470" width="2" height="1" fill="#000"/><rect x="6" y="476" width="2" height="1" fill="#000"/><rect x="6" y="483" width="2" height="1" fill="#000"/><rect x="6" y="489" width="2" height="1" fill="#000"/><rect x="4" y="495" width="5" height="1" fill="#000"/><rect x="6" y="501" width="2" height="1" fill="#000"/><rect x="6" y="508" width="2" height="1" fill="#000"/><rect x="6" y="514" width="2" height="1" fill="#000"/><rect x="6" y="520" width="2" height="1" fill="#000"/><rect x="6" y="533" width="2" height="1" fill="#000"/><rect x="6" y="539" width="2" height="1" fill="#000"/><rect x="6" y="545" width="2" height="1" fill="#000"/><rect x="6" y="551" width="2" height="1" fill="#000"/><rect x="4" y="558" width="5" height="1" fill="#000"/><rect x="6" y="564" width="2" height="1" fill="#000"/><rect x="6" y="570" width="2" height="1" fill="#000"/><rect x="6" y="576" width="2" height="1" fill="#000"/><rect x="6" y="582" width="2" height="1" fill="#000"/><rect x="6" y="595" width="2" height="1" fill="#000"/><rect x="6" y="601" width="2" height="1" fill="#000"/><rect x="6" y="607" width="2" height="1" fill="#000"/><rect x="6" y="614" width="2" height="1" fill="#000"/><rect x="4" y="620" width="5" height="1" fill="#000"/><rect x="6" y="626" width="2" height="1" fill="#000"/><rect x="6" y="632" width="2" height="1" fill="#000"/><rect x="6" y="639" width="2" height="1" fill="#000"/><rect x="6" y="645" width="2" height="1" fill="#000"/><rect x="6" y="657" width="2" height="1" fill="#000"/><rect x="6" y="664" width="2" height="1" fill="#000"/><rect x="6" y="670" width="2" height="1" fill="#000"/><rect x="6" y="676" width="2" height="1" fill="#000"/><rect x="4" y="682" width="5" height="1" fill="#000"/><rect x="6" y="689" width="2" height="1" fill="#000"/><rect x="6" y="695" width="2" height="1" fill="#000"/><rect x="6" y="701" width="2" height="1" fill="#000"/><rect x="6" y="707" width="2" height="1" fill="#000"/><rect x="6" y="720" width="2" height="1" fill="#000"/><rect x="6" y="726" width="2" height="1" fill="#000"/><rect x="6" y="732" width="2" height="1" fill="#000"/><rect x="6" y="738" width="2" height="1" fill="#000"/><rect x="4" y="745" width="5" height="1" fill="#000"/><rect x="6" y="751" width="2" height="1" fill="#000"/><rect x="6" y="757" width="2" height="1" fill="#000"/><rect x="6" y="763" width="2" height="1" fill="#000"/><rect x="6" y="770" width="2" height="1" fill="#000"/><rect x="6" y="782" width="2" height="1" fill="#000"/><rect x="6" y="788" width="2" height="1" fill="#000"/><rect x="6" y="795" width="2" height="1" fill="#000"/><rect x="6" y="801" width="2" height="1" fill="#000"/><rect x="4" y="807" width="5" height="1" fill="#000"/><rect x="6" y="813" width="2" height="1" fill="#000"/><rect x="6" y="820" width="2" height="1" fill="#000"/><rect x="6" y="826" width="2" height="1" fill="#000"/><rect x="6" y="832" width="2" height="1" fill="#000"/><rect x="6" y="845" width="2" height="1" fill="#000"/><rect x="6" y="851" width="2" height="1" fill="#000"/><rect x="6" y="857" width="2" height="1" fill="#000"/><rect x="6" y="863" width="2" height="1" fill="#000"/><rect x="4" y="870" width="5" height="1" fill="#000"/><rect x="6" y="876" width="2" height="1" fill="#000"/><text transform="translate(10.500 27.6) rotate(-90)" text-anchor="middle" font-size="10" font-family="Liberation Sans,sans-serif" fill="#000">4</text><text transform="translate(10.500 90.0) rotate(-90)" text-anchor="middle" font-size="10" font-family="Liberation Sans,sans-serif" fill="#000">5</text><text transform="translate(10.500 152.4) rotate(-90)" text-anchor="middle" font-size="10" font-family="Liberation Sans,sans-serif" fill="#000">6</text><text transform="translate(10.500 214.8) rotate(-90)" text-anchor="middle" font-size="10" font-family="Liberation Sans,sans-serif" fill="#000">7</text><text transform="translate(10.500 277.2) rotate(-90)" text-anchor="middle" font-size="10" font-family="Liberation Sans,sans-serif" fill="#000">8</text><text transform="translate(10.500 339.6) rotate(-90)" text-anchor="middle" font-size="10" font-family="Liberation Sans,sans-serif" fill="#000">9</text><text transform="translate(10.500 402.0) rotate(-90)" text-anchor="middle" font-size="10" font-family="Liberation Sans,sans-serif" fill="#000">10</text><text transform="translate(10.500 464.4) rotate(-90)" text-anchor="middle" font-size="10" font-family="Liberation Sans,sans-serif" fill="#000">11</text><text transform="translate(10.500 526.8) rotate(-90)" text-anchor="middle" font-size="10" font-family="Liberation Sans,sans-serif" fill="#000">12</text><text transform="translate(10.500 589.2) rotate(-90)" text-anchor="middle" font-size="10" font-family="Liberation Sans,sans-serif" fill="#000">13</text><text transform="translate(10.500 651.6) rotate(-90)" text-anchor="middle" font-size="10" font-family="Liberation Sans,sans-serif" fill="#000">14</text><text transform="translate(10.500 714.0) rotate(-90)" text-anchor="middle" font-size="10" font-family="Liberation Sans,sans-serif" fill="#000">15</text><text transform="translate(10.500 776.4) rotate(-90)" text-anchor="middle" font-size="10" font-family="Liberation Sans,sans-serif" fill="#000">16</text><text transform="translate(10.500 838.8) rotate(-90)" text-anchor="middle" font-size="10" font-family="Liberation Sans,sans-serif" fill="#000">17</text><rect x="0" y="36" width="14" height="1" fill="#000"/></svg>
<div style="left:0px;top:0px;width:1920px;height:23px;background:#fff"></div><svg style="left:1px;top:3px" width="18" height="17" viewBox="0 0 18 17"><path d="M9.300 4.200 A4.300 6 0 1 0 9 14" fill="none" stroke="#cf2a2e" stroke-width="1.100"/><text x="12" y="14.800" text-anchor="middle" font-family="Liberation Serif,serif" font-size="17" fill="#cf2a2e">A</text></svg><div class="t" style="left:23px;top:5px;font-family:'DejaVu Sans','Liberation Sans',sans-serif;font-size:10.6px;line-height:15px">طراح گزارش پویا</div><div style="left:1799px;top:10px;width:10px;height:1px;background:#000"></div><div style="left:1844px;top:7px;width:8px;height:8px;border:1px solid #000"></div><div style="left:1846px;top:5px;width:8px;height:8px;border:1px solid #000;border-left:0;border-bottom:0"></div><div style="left:1846px;top:5px;width:1px;height:2px;background:#000"></div><div style="left:1852px;top:12px;width:2px;height:1px;background:#000"></div><svg style="left:1890px;top:5px" width="10" height="10" viewBox="0 0 10 10"><path d="M0 0 L10 10 M10 0 L0 10" stroke="#000" stroke-width="1.1" fill="none"/></svg>
<div class="t" style="left:6px;top:27px;font-family:'DejaVu Sans','Liberation Sans',sans-serif;font-size:11.3px;line-height:15px">پرونده</div><div class="t" style="left:50px;top:27px;font-family:'DejaVu Sans','Liberation Sans',sans-serif;font-size:11.3px;line-height:15px">ويرايش</div><div class="t" style="left:100px;top:27px;font-family:'DejaVu Sans','Liberation Sans',sans-serif;font-size:11.3px;line-height:15px">گزارش</div><div class="t" style="left:145px;top:27px;font-family:'DejaVu Sans','Liberation Sans',sans-serif;font-size:11.3px;line-height:15px">نمايش</div><div class="t" style="left:191px;top:27px;font-family:'DejaVu Sans','Liberation Sans',sans-serif;font-size:11.3px;line-height:15px">راهنما</div>
<div style="left:-1px;top:43px;width:432px;height:27px;border-left:1px solid #fff;border-top:1px solid #fff;border-right:1px solid #a0a0a0;border-bottom:1px solid #a0a0a0"></div><div style="left:4px;top:45px;width:1px;height:22px;background:#fff"></div><div style="left:5px;top:45px;width:1px;height:22px;background:#a0a0a0"></div><div style="left:3px;top:67px;width:3px;height:1px;background:#a0a0a0"></div><svg style="left:13px;top:49px" width="16" height="16" viewBox="0 0 16 16"><path d="M2.5 1.5h8l3 3v10h-11z" fill="url(#gb)" stroke="#3b5a92"/><path d="M10.5 1.5v3h3" fill="#fff" stroke="#3b5a92"/></svg><svg style="left:37px;top:49px" width="16" height="16" viewBox="0 0 16 16"><path d="M1.5 5.5h5l1 1.5h6v7h-12z" fill="#cfcfcf" stroke="#bdbdbd"/><path d="M9 3.5c2-2 4-1 5 .5m0-2v2.4h-2.4" fill="none" stroke="#bdbdbd"/></svg><svg style="left:60px;top:49px" width="16" height="16" viewBox="0 0 16 16"><path d="M1.5 1.5h13v13h-13z" fill="#cfcfcf" stroke="#bdbdbd"/><rect x="4" y="2" width="8" height="4.5" fill="#dcdcdc"/><rect x="3.5" y="9" width="9" height="5" fill="#d8d8d8" stroke="#bdbdbd" stroke-width=".6"/><path d="M4.5 11h7M4.5 12.6h7" stroke="#bdbdbd" stroke-width=".7"/></svg><svg style="left:83px;top:49px" width="16" height="16" viewBox="0 0 16 16"><path d="M1.5 .5h11v12h-11z" fill="#fff" stroke="#3b5a92"/><circle cx="7.5" cy="7" r="4.2" fill="#b9d6f7" stroke="#5b8fd8" stroke-width="1.3"/><path d="M10.8 10.6l4 4" stroke="#c98a3c" stroke-width="2.2" stroke-linecap="round"/></svg><svg style="left:113px;top:49px" width="16" height="16" viewBox="0 0 16 16"><path d="M3.5 2.5h10v12h-10z" fill="url(#gb)" stroke="#3b5a92"/><path d="M3.5 -1v8M-.5 3h8M.8 .3l5.4 5.4M6.2 .3l-5.4 5.4" stroke="#f3c522" stroke-width="1.3"/><rect x="2.5" y="2" width="2" height="2" fill="#fff7c0"/></svg><svg style="left:137px;top:49px" width="16" height="16" viewBox="0 0 16 16"><path d="M3.5 2.5h10v12h-10z" fill="#e3e3e3" stroke="#cfcfcf"/><path d="M2 1l8 9M10 1l-8 9" stroke="#bdbdbd" stroke-width="1.3"/></svg><svg style="left:160px;top:49px" width="16" height="16" viewBox="0 0 16 16"><path d="M3.5 1.5h11v12h-11z" fill="url(#gb)" stroke="#3b5a92"/><path d="M2.5 13.5l6.5-6.5" stroke="#5d8fe0" stroke-width="3" stroke-linecap="round"/><path d="M9.2 3.3a2.6 2.6 0 1 0 3.4 3.4l-1.7.3-1.4-1.4z" fill="#e8eefa" stroke="#55698c" stroke-width=".9"/></svg><svg style="left:190px;top:49px" width="16" height="16" viewBox="0 0 16 16"><path d="M10.5 1l-4 10M5.5 1l4 10" stroke="#bdbdbd" stroke-width="1.3" fill="none"/><circle cx="5" cy="12.5" r="2" fill="none" stroke="#bdbdbd" stroke-width="1.3"/><circle cx="11" cy="12.5" r="2" fill="none" stroke="#bdbdbd" stroke-width="1.3"/></svg><svg style="left:214px;top:49px" width="16" height="16" viewBox="0 0 16 16"><path d="M1.5 1.5h6l2 2v7h-8z" fill="#e4e4e4" stroke="#cfcfcf"/><path d="M6.5 5.5h6l2 2v7h-8z" fill="#e4e4e4" stroke="#cfcfcf"/></svg><svg style="left:237px;top:49px" width="16" height="16" viewBox="0 0 16 16"><path d="M1.5 2.5h10v12h-10z" fill="#cfcfcf" stroke="#bdbdbd"/><rect x="4" y="1" width="5" height="3" fill="#c0c0c0" stroke="#bdbdbd" stroke-width=".8"/><path d="M6.5 5.5h6l2 2v7h-8z" fill="#e6e6e6" stroke="#cfcfcf"/></svg><svg style="left:268px;top:49px" width="16" height="16" viewBox="0 0 16 16"><path d="M3 4v4h4" fill="none" stroke="#bdbdbd" stroke-width="1.4"/><path d="M3.5 7.5c2-4 8-4 8.500 .5c.3 3-2 5-4.500 6" fill="none" stroke="#cfcfcf" stroke-width="2.4"/></svg><svg style="left:291px;top:49px" width="16" height="16" viewBox="0 0 16 16"><path d="M13 4v4h-4" fill="none" stroke="#bdbdbd" stroke-width="1.4"/><path d="M12.500 7.500c-2-4-8-4-8.500 .5c-.3 3 2 5 4.500 6" fill="none" stroke="#cfcfcf" stroke-width="2.4"/></svg><svg style="left:321px;top:49px" width="16" height="16" viewBox="0 0 16 16"><rect x="2.5" y="2.500" width="7" height="7" fill="#e2e2e2" stroke="#cfcfcf"/><rect x="7.5" y="7.500" width="7" height="7" fill="#ececec" stroke="#bdbdbd"/><circle cx="2" cy="2" r="1.3" fill="#efefef" stroke="#bdbdbd" stroke-width=".9"/><circle cx="14" cy="2" r="1.3" fill="#efefef" stroke="#bdbdbd" stroke-width=".9"/><circle cx="2" cy="14" r="1.3" fill="#efefef" stroke="#bdbdbd" stroke-width=".9"/><circle cx="14" cy="14" r="1.3" fill="#efefef" stroke="#bdbdbd" stroke-width=".9"/></svg><svg style="left:344px;top:49px" width="16" height="16" viewBox="0 0 16 16"><rect x="1.5" y="1.500" width="8" height="7" fill="#e2e2e2" stroke="#cfcfcf" stroke-dasharray="1 1"/><rect x="6.5" y="7.500" width="8" height="7" fill="#ececec" stroke="#bdbdbd" stroke-dasharray="1 1"/><circle cx="2" cy="2" r="1.3" fill="#efefef" stroke="#bdbdbd" stroke-width=".9"/><circle cx="9.5" cy="2" r="1.3" fill="#efefef" stroke="#bdbdbd" stroke-width=".9"/><circle cx="2" cy="8.5" r="1.3" fill="#efefef" stroke="#bdbdbd" stroke-width=".9"/><circle cx="6.5" cy="7.5" r="1.3" fill="#efefef" stroke="#bdbdbd" stroke-width=".9"/><circle cx="14" cy="7.5" r="1.3" fill="#efefef" stroke="#bdbdbd" stroke-width=".9"/><circle cx="6.5" cy="14" r="1.3" fill="#efefef" stroke="#bdbdbd" stroke-width=".9"/><circle cx="14" cy="14" r="1.3" fill="#efefef" stroke="#bdbdbd" stroke-width=".9"/></svg><div style="left:106px;top:47px;width:1px;height:19px;background:#a0a0a0"></div><div style="left:107px;top:47px;width:1px;height:19px;background:#fff"></div><div style="left:183px;top:47px;width:1px;height:19px;background:#a0a0a0"></div><div style="left:184px;top:47px;width:1px;height:19px;background:#fff"></div><div style="left:260px;top:47px;width:1px;height:19px;background:#a0a0a0"></div><div style="left:261px;top:47px;width:1px;height:19px;background:#fff"></div><div style="left:314px;top:47px;width:1px;height:19px;background:#a0a0a0"></div><div style="left:315px;top:47px;width:1px;height:19px;background:#fff"></div><div style="left:368px;top:47px;width:1px;height:19px;background:#a0a0a0"></div><div style="left:369px;top:47px;width:1px;height:19px;background:#fff"></div><div style="left:374px;top:48px;width:50px;height:17px;background:#fff"></div><div style="left:412px;top:49px;width:11px;height:15px;background:#f0f0f0"></div><svg style="left:415.0px;top:55.5px" width="5" height="3" viewBox="0 0 5 3"><path d="M0 0h5L2.5 3z" fill="#000"/></svg><div class="t" style="right:1512px;top:50px;font-family:'DejaVu Sans','Liberation Sans',sans-serif;font-size:11px;line-height:13px">صفحه</div><div style="left:454px;top:43px;width:398px;height:27px;border-left:1px solid #fff;border-top:1px solid #fff;border-right:1px solid #a0a0a0;border-bottom:1px solid #a0a0a0"></div><div style="left:458px;top:45px;width:1px;height:22px;background:#fff"></div><div style="left:459px;top:45px;width:1px;height:22px;background:#a0a0a0"></div><div style="left:457px;top:67px;width:3px;height:1px;background:#a0a0a0"></div><div style="left:465px;top:45px;width:22px;height:23px;border:1px solid #a0a0a0;border-right-color:#fff;border-bottom-color:#fff;background:#f8f8f8"></div><div style="left:489px;top:45px;width:22px;height:23px;border:1px solid #a0a0a0;border-right-color:#fff;border-bottom-color:#fff;background:#f8f8f8"></div><svg style="left:468px;top:49px" width="16" height="16" viewBox="0 0 16 16"><path d="M3.500 1v15M7.500 1v15M11.500 1v15M14.500 1v15M1 3.500h15M1 7.500h15M1 11.500h15M1 14.500h15" stroke="#222" stroke-width="1"/></svg><svg style="left:492px;top:49px" width="16" height="16" viewBox="0 0 16 16"><rect x="5" y="5" width="6.500" height="6.500" fill="url(#gd)"/><path d="M4.5 1v14.500M12 1v14.500M1 4.500h14.500M1 12h14.500" stroke="#2b2b2b" stroke-width="1.1"/><path d="M6.500 1.500h3l-1.500 2zM1 6.500v3l2-1.500z" fill="#444"/></svg><svg style="left:514px;top:49px" width="16" height="16" viewBox="0 0 16 16"><rect x="4.5" y="4.500" width="7" height="7" fill="#dedede"/><path d="M4.5 1v14M11.5 1v14M1 4.500h14M1 11.500h14" stroke="#bdbdbd" stroke-width="1"/><path d="M5 11l6-6" stroke="#f4f4f4"/><path d="M6.500 1.500h3l-1.500 1.500zM6.500 14.500h3l-1.500-1.500zM1.500 6.500v3l1.500-1.500zM14.500 6.500v3l-1.500-1.500z" fill="#bdbdbd"/></svg><svg style="left:545px;top:49px" width="16" height="16" viewBox="0 0 16 16"><path d="M1.500 1.500v13" stroke="#222" stroke-width="1.2"/><rect x="3.500" y="2.500" width="7" height="4.500" fill="url(#gl)" stroke="#8fb0ea" stroke-width=".8"/><rect x="3.500" y="8.500" width="11" height="4.500" fill="url(#gd)" stroke="#6d95de" stroke-width=".8"/></svg><svg style="left:568px;top:49px" width="16" height="16" viewBox="0 0 16 16"><path d="M8 1v14" stroke="#222" stroke-width="1.100"/><rect x="4.500" y="2.500" width="7" height="4.500" fill="url(#gl)" stroke="#8fb0ea" stroke-width=".8"/><rect x="2" y="8.500" width="12" height="4.500" fill="url(#gd)" stroke="#6d95de" stroke-width=".8"/></svg><svg style="left:590px;top:49px" width="16" height="16" viewBox="0 0 16 16"><path d="M14.500 1.500v13" stroke="#222" stroke-width="1.2"/><rect x="5.500" y="2.500" width="7" height="4.500" fill="url(#gl)" stroke="#8fb0ea" stroke-width=".8"/><rect x="1.500" y="8.500" width="11" height="4.500" fill="url(#gd)" stroke="#6d95de" stroke-width=".8"/></svg><svg style="left:622px;top:49px" width="16" height="16" viewBox="0 0 16 16"><path d="M1.500 1.500h13" stroke="#222" stroke-width="1.2"/><rect x="2.500" y="3.500" width="4.500" height="7" fill="url(#gl)" stroke="#8fb0ea" stroke-width=".8"/><rect x="8.500" y="3.500" width="4.500" height="11" fill="url(#gd)" stroke="#6d95de" stroke-width=".8"/></svg><svg style="left:644px;top:49px" width="16" height="16" viewBox="0 0 16 16"><path d="M1 8h14" stroke="#222" stroke-width="1.100"/><rect x="2.500" y="4.500" width="4.500" height="7" fill="url(#gl)" stroke="#8fb0ea" stroke-width=".8"/><rect x="8.500" y="2" width="4.500" height="12" fill="url(#gd)" stroke="#6d95de" stroke-width=".8"/></svg><svg style="left:667px;top:49px" width="16" height="16" viewBox="0 0 16 16"><path d="M1.500 14.500h13" stroke="#222" stroke-width="1.2"/><rect x="2.500" y="5.500" width="4.500" height="7" fill="url(#gl)" stroke="#8fb0ea" stroke-width=".8"/><rect x="8.500" y="1.500" width="4.500" height="11" fill="url(#gd)" stroke="#6d95de" stroke-width=".8"/></svg><svg style="left:699px;top:49px" width="16" height="16" viewBox="0 0 16 16"><path d="M1 8h14" stroke="#4a6fb0" stroke-width="1"/><rect x="1" y="5.500" width="2.500" height="5" fill="url(#gl)" stroke="#8fb0ea" stroke-width=".8"/><rect x="6" y="3" width="3.500" height="10" fill="url(#gd)" stroke="#6d95de" stroke-width=".8"/><rect x="12" y="5.500" width="2.500" height="5" fill="url(#gl)" stroke="#8fb0ea" stroke-width=".8"/></svg><svg style="left:722px;top:49px" width="16" height="16" viewBox="0 0 16 16"><path d="M8 1v14" stroke="#4a6fb0" stroke-width="1"/><rect x="5.500" y="1" width="5" height="2.500" fill="url(#gl)" stroke="#8fb0ea" stroke-width=".8"/><rect x="3" y="6" width="10" height="3.500" fill="url(#gd)" stroke="#6d95de" stroke-width=".8"/><rect x="5.500" y="12" width="5" height="2.500" fill="url(#gl)" stroke="#8fb0ea" stroke-width=".8"/></svg><svg style="left:753px;top:49px" width="16" height="16" viewBox="0 0 16 16"><rect x="1" y="1" width="14" height="14" fill="#fff" stroke="#3b5a92" stroke-width="1.2"/><rect x="6" y="4" width="4" height="8" fill="url(#gd)" stroke="#6d95de" stroke-width=".8"/><path d="M3 8h10" stroke="#3b5a92"/></svg><svg style="left:776px;top:49px" width="16" height="16" viewBox="0 0 16 16"><rect x="1" y="1" width="14" height="14" fill="#fff" stroke="#3b5a92" stroke-width="1.2"/><rect x="4" y="6" width="8" height="4" fill="url(#gd)" stroke="#6d95de" stroke-width=".8"/><path d="M8 3v10" stroke="#3b5a92"/></svg><svg style="left:807px;top:49px" width="16" height="16" viewBox="0 0 16 16"><rect x="1" y="1.500" width="14" height="4.500" fill="url(#gd)" stroke="#6d95de" stroke-width=".8"/><rect x="6" y="10" width="4" height="4" fill="url(#gl)" stroke="#8fb0ea" stroke-width=".8"/><path d="M1.500 7v6M14.500 7v6" stroke="#555" stroke-dasharray="1 1"/><path d="M1.500 12h4M14.500 12h-4" stroke="#555"/></svg><svg style="left:830px;top:49px" width="16" height="16" viewBox="0 0 16 16"><rect x="10" y="1" width="4.500" height="14" fill="url(#gd)" stroke="#6d95de" stroke-width=".8"/><rect x="2" y="6" width="4" height="4" fill="url(#gl)" stroke="#8fb0ea" stroke-width=".8"/><path d="M3 1.500h6M3 14.500h6" stroke="#555" stroke-dasharray="1 1"/><path d="M4 1.500v4M4 14.500v-4" stroke="#555"/></svg><div style="left:537px;top:47px;width:1px;height:19px;background:#a0a0a0"></div><div style="left:538px;top:47px;width:1px;height:19px;background:#fff"></div><div style="left:614px;top:47px;width:1px;height:19px;background:#a0a0a0"></div><div style="left:615px;top:47px;width:1px;height:19px;background:#fff"></div><div style="left:691px;top:47px;width:1px;height:19px;background:#a0a0a0"></div><div style="left:692px;top:47px;width:1px;height:19px;background:#fff"></div><div style="left:745px;top:47px;width:1px;height:19px;background:#a0a0a0"></div><div style="left:746px;top:47px;width:1px;height:19px;background:#fff"></div><div style="left:800px;top:47px;width:1px;height:19px;background:#a0a0a0"></div><div style="left:801px;top:47px;width:1px;height:19px;background:#fff"></div><div style="left:-1px;top:70px;width:669px;height:27px;border-left:1px solid #fff;border-top:1px solid #fff;border-right:1px solid #a0a0a0;border-bottom:1px solid #a0a0a0"></div><div style="left:4px;top:72px;width:1px;height:22px;background:#fff"></div><div style="left:5px;top:72px;width:1px;height:22px;background:#a0a0a0"></div><div style="left:3px;top:94px;width:3px;height:1px;background:#a0a0a0"></div><div style="left:11px;top:74px;width:93px;height:19px;border:1px solid #a0a0a0;background:#f0f0f0;box-shadow:inset 1px 1px 0 #e3e3e3"></div><svg style="left:93.5px;top:82.5px" width="5" height="3" viewBox="0 0 5 3"><path d="M0 0h5L2.5 3z" fill="#606060"/></svg><div style="left:110px;top:75px;width:142px;height:18px;background:#fff"></div><div style="left:241px;top:76px;width:11px;height:16px;background:#f0f0f0"></div><svg style="left:244.0px;top:82.5px" width="5" height="3" viewBox="0 0 5 3"><path d="M0 0h5L2.5 3z" fill="#000"/></svg><svg style="left:112px;top:76px" width="16" height="16" viewBox="0 0 16 16"><text x="0" y="9" font-family="Liberation Serif,serif" font-weight="bold" font-size="10" fill="#888">T</text><text x="4" y="14" font-family="Liberation Serif,serif" font-weight="bold" font-size="14" fill="#000">T</text></svg><div class="t" style="left:128px;top:77px;font-size:11px;line-height:14px">Tahoma</div><div style="left:260px;top:75px;width:38px;height:18px;background:#fff"></div><div style="left:286px;top:76px;width:11px;height:16px;background:#f0f0f0"></div><svg style="left:289.0px;top:82.5px" width="5" height="3" viewBox="0 0 5 3"><path d="M0 0h5L2.5 3z" fill="#000"/></svg><div class="t" style="left:263px;top:77px;font-size:11px;line-height:14px">10</div><div class="t" style="left:311px;top:75px;font-family:'Liberation Serif',serif;color:#555;font-weight:bold;font-size:15px;line-height:16px">B</div><div class="t" style="left:334px;top:75px;font-family:'Liberation Serif',serif;color:#555;font-weight:bold;font-style:italic;font-size:15px;line-height:16px">I</div><div class="t" style="left:355px;top:75px;font-family:'Liberation Serif',serif;color:#555;font-size:15px;line-height:16px">U</div><div style="left:356px;top:89px;width:9px;height:1px;background:#555"></div><div style="left:376px;top:74px;width:1px;height:19px;background:#a0a0a0"></div><div style="left:377px;top:74px;width:1px;height:19px;background:#fff"></div><svg style="left:383px;top:75px" width="18" height="17" viewBox="0 0 18 17"><text x="0" y="11" font-family="Liberation Serif,serif" font-weight="bold" font-size="13" fill="#2b4a7a">T</text><text x="6" y="15" font-family="Liberation Serif,serif" font-weight="bold" font-size="13" fill="#6f93cf">T</text></svg><svg style="left:407px;top:74px" width="17" height="18" viewBox="0 0 17 18"><text x="8" y="12" text-anchor="middle" font-family="Liberation Serif,serif" font-weight="bold" font-style="italic" font-size="15" fill="#6a98e6">A</text><rect x="1" y="14" width="15" height="2.500" fill="#000"/></svg><svg style="left:430.5px;top:82.0px" width="7" height="4" viewBox="0 0 7 4"><path d="M0 0h7L3.5 4z" fill="#000"/></svg><svg style="left:445px;top:75px" width="16" height="16" viewBox="0 0 16 16"><rect x="1" y="2.500" width="14" height="11" fill="#c9c9c9"/><text x="8" y="11.500" font-size="9" text-anchor="middle" fill="#f4f4f4" font-family="Liberation Sans,sans-serif">ab</text></svg><svg style="left:468px;top:75px" width="16" height="16" viewBox="0 0 16 16"><path d="M3.500 10a5 5 0 1 1 4.500 3" fill="none" stroke="#cfcfcf" stroke-width="2.600"/><path d="M1 9.500l5-2-.5 5z" fill="#bdbdbd"/><circle cx="8" cy="8" r="1.300" fill="#cfcfcf"/></svg><div style="left:491px;top:74px;width:1px;height:19px;background:#a0a0a0"></div><div style="left:492px;top:74px;width:1px;height:19px;background:#fff"></div><svg style="left:499px;top:75px" width="16" height="16" viewBox="0 0 16 16"><path d="M2 2.5h12" stroke="#a0a0a0" stroke-width="1"/><path d="M2 4.5h9" stroke="#a0a0a0" stroke-width="1"/><path d="M2 6.5h12" stroke="#a0a0a0" stroke-width="1"/><path d="M2 8.5h9" stroke="#a0a0a0" stroke-width="1"/><path d="M2 10.5h12" stroke="#a0a0a0" stroke-width="1"/><path d="M2 12.5h9" stroke="#a0a0a0" stroke-width="1"/></svg><svg style="left:522px;top:75px" width="16" height="16" viewBox="0 0 16 16"><path d="M2.0 2.5h12" stroke="#a0a0a0" stroke-width="1"/><path d="M4.0 4.5h8" stroke="#a0a0a0" stroke-width="1"/><path d="M2.0 6.5h12" stroke="#a0a0a0" stroke-width="1"/><path d="M4.0 8.5h8" stroke="#a0a0a0" stroke-width="1"/><path d="M2.0 10.5h12" stroke="#a0a0a0" stroke-width="1"/><path d="M4.0 12.5h8" stroke="#a0a0a0" stroke-width="1"/></svg><svg style="left:545px;top:75px" width="16" height="16" viewBox="0 0 16 16"><path d="M2 2.5h12" stroke="#a0a0a0" stroke-width="1"/><path d="M5 4.5h9" stroke="#a0a0a0" stroke-width="1"/><path d="M2 6.5h12" stroke="#a0a0a0" stroke-width="1"/><path d="M5 8.5h9" stroke="#a0a0a0" stroke-width="1"/><path d="M2 10.5h12" stroke="#a0a0a0" stroke-width="1"/><path d="M5 12.5h9" stroke="#a0a0a0" stroke-width="1"/></svg><svg style="left:568px;top:75px" width="16" height="16" viewBox="0 0 16 16"><path d="M2 2.5h12" stroke="#a0a0a0" stroke-width="1"/><path d="M2 4.5h12" stroke="#a0a0a0" stroke-width="1"/><path d="M2 6.5h12" stroke="#a0a0a0" stroke-width="1"/><path d="M2 8.5h12" stroke="#a0a0a0" stroke-width="1"/><path d="M2 10.5h12" stroke="#a0a0a0" stroke-width="1"/><path d="M2 12.5h12" stroke="#a0a0a0" stroke-width="1"/></svg><svg style="left:599px;top:75px" width="16" height="16" viewBox="0 0 16 16"><path d="M2.5 2v12" stroke="#a0a0a0" stroke-width="1"/><path d="M4.5 2v9" stroke="#a0a0a0" stroke-width="1"/><path d="M6.5 2v12" stroke="#a0a0a0" stroke-width="1"/><path d="M8.5 2v9" stroke="#a0a0a0" stroke-width="1"/><path d="M10.5 2v12" stroke="#a0a0a0" stroke-width="1"/><path d="M12.5 2v9" stroke="#a0a0a0" stroke-width="1"/></svg><svg style="left:622px;top:75px" width="16" height="16" viewBox="0 0 16 16"><path d="M2.5 4.0v8" stroke="#a0a0a0" stroke-width="1"/><path d="M4.5 2.0v12" stroke="#a0a0a0" stroke-width="1"/><path d="M6.5 4.0v8" stroke="#a0a0a0" stroke-width="1"/><path d="M8.5 2.0v12" stroke="#a0a0a0" stroke-width="1"/><path d="M10.5 4.0v8" stroke="#a0a0a0" stroke-width="1"/><path d="M12.5 2.0v12" stroke="#a0a0a0" stroke-width="1"/></svg><svg style="left:645px;top:75px" width="16" height="16" viewBox="0 0 16 16"><path d="M2.5 5v9" stroke="#a0a0a0" stroke-width="1"/><path d="M4.5 2v12" stroke="#a0a0a0" stroke-width="1"/><path d="M6.5 5v9" stroke="#a0a0a0" stroke-width="1"/><path d="M8.5 2v12" stroke="#a0a0a0" stroke-width="1"/><path d="M10.5 5v9" stroke="#a0a0a0" stroke-width="1"/><path d="M12.5 2v12" stroke="#a0a0a0" stroke-width="1"/></svg><div style="left:591px;top:74px;width:1px;height:19px;background:#a0a0a0"></div><div style="left:592px;top:74px;width:1px;height:19px;background:#fff"></div><div style="left:668px;top:70px;width:358px;height:27px;border-left:1px solid #fff;border-top:1px solid #fff;border-right:1px solid #a0a0a0;border-bottom:1px solid #a0a0a0"></div><div style="left:671px;top:72px;width:1px;height:22px;background:#fff"></div><div style="left:672px;top:72px;width:1px;height:22px;background:#a0a0a0"></div><div style="left:670px;top:94px;width:3px;height:1px;background:#a0a0a0"></div><svg style="left:680px;top:75px" width="16" height="16" viewBox="0 0 16 16"><path d="M1.500 1.500h13v13h-13zM8 2v12M2 8h12" stroke="#555" stroke-width="1" stroke-dasharray="1 1.500" fill="none"/><path d="M1 1.500h14" stroke="#4a6288" stroke-width="1.3" fill="none"/></svg><svg style="left:704px;top:75px" width="16" height="16" viewBox="0 0 16 16"><path d="M1.500 1.500h13v13h-13zM8 2v12M2 8h12" stroke="#555" stroke-width="1" stroke-dasharray="1 1.500" fill="none"/><path d="M1 14.500h14" stroke="#4a6288" stroke-width="1.3" fill="none"/></svg><svg style="left:727px;top:75px" width="16" height="16" viewBox="0 0 16 16"><path d="M1.500 1.500h13v13h-13zM8 2v12M2 8h12" stroke="#555" stroke-width="1" stroke-dasharray="1 1.500" fill="none"/><path d="M1.500 1v14" stroke="#4a6288" stroke-width="1.3" fill="none"/></svg><svg style="left:749px;top:75px" width="16" height="16" viewBox="0 0 16 16"><path d="M1.500 1.500h13v13h-13zM8 2v12M2 8h12" stroke="#555" stroke-width="1" stroke-dasharray="1 1.500" fill="none"/><path d="M14.500 1v14" stroke="#4a6288" stroke-width="1.3" fill="none"/></svg><svg style="left:780px;top:75px" width="16" height="16" viewBox="0 0 16 16"><rect x="1.500" y="1.500" width="13" height="13" fill="#fff" stroke="#4a6288" stroke-width="1.3"/><path d="M8 4v8M4 8h8" stroke="#555" stroke-width="1" stroke-dasharray="1 1.500" fill="none"/></svg><svg style="left:803px;top:75px" width="16" height="16" viewBox="0 0 16 16"><path d="M1.500 1.500h13v13h-13zM8 2v12M2 8h12" stroke="#555" stroke-width="1" stroke-dasharray="1 1.500" fill="none"/></svg><svg style="left:826px;top:75px" width="16" height="16" viewBox="0 0 16 16"><path d="M3.500 1.500h11v11h-11z" stroke="#555" stroke-width="1" stroke-dasharray="1 1.500" fill="none"/><path d="M2.500 13.500l6-6" stroke="#5d8fe0" stroke-width="3" stroke-linecap="round"/><path d="M8.700 3.800a2.500 2.500 0 1 0 3.400 3.400l-1.700.3-1.400-1.400z" fill="#e8eefa" stroke="#7b88a0" stroke-width=".9"/></svg><svg style="left:859px;top:75px" width="16" height="16" viewBox="0 0 16 16"><path d="M3 6l5-3.500 5 5-5 5.500z" fill="#f2f6fc" stroke="#5f7fae" stroke-width="1"/><path d="M4 7l8 .5-4 4.500z" fill="#9cc0ee"/><path d="M6 4c0-4 4-4 3.500 0" fill="none" stroke="#333" stroke-width=".9"/><path d="M13 6c2 1 2.500 3.500 1.500 5c-1-1-1.500-3-1.500-5z" fill="#e02020"/><rect x="0" y="13.500" width="16" height="2.500" fill="#000"/></svg><svg style="left:896px;top:75px" width="16" height="16" viewBox="0 0 16 16"><rect x="1.500" y="2.500" width="13" height="10.500" fill="#dcdcdc" stroke="#c8c8c8"/></svg><svg style="left:919px;top:75px" width="16" height="16" viewBox="0 0 16 16"><path d="M10 6l4.500-5" stroke="#e4b04a" stroke-width="2.400" stroke-linecap="round"/><path d="M3 12c3 .5 6-2 7.500-5.500l-2-1.500c-2 2-4 3-5.500 7z" fill="#8fa6c8" stroke="#5a6f92" stroke-width=".7"/><rect x="0" y="13.500" width="16" height="2.500" fill="#000"/></svg><svg style="left:956px;top:75px" width="16" height="16" viewBox="0 0 16 16"><path d="M0 3h16" stroke="#2f55a0" stroke-width="1.200"/><path d="M0 6.500h16" stroke="#2f55a0" stroke-width="1.200" stroke-dasharray="1 1"/><path d="M0 10h16" stroke="#2f55a0" stroke-width="1.200" stroke-dasharray="3 1"/><path d="M0 13.500h16" stroke="#2f55a0" stroke-width="1.200" stroke-dasharray="3 1 1 1"/></svg><div style="left:773px;top:74px;width:1px;height:19px;background:#a0a0a0"></div><div style="left:774px;top:74px;width:1px;height:19px;background:#fff"></div><div style="left:850px;top:74px;width:1px;height:19px;background:#a0a0a0"></div><div style="left:851px;top:74px;width:1px;height:19px;background:#fff"></div><svg style="left:881.5px;top:82.0px" width="7" height="4" viewBox="0 0 7 4"><path d="M0 0h7L3.5 4z" fill="#000"/></svg><svg style="left:942.5px;top:82.0px" width="7" height="4" viewBox="0 0 7 4"><path d="M0 0h7L3.5 4z" fill="#000"/></svg><div style="left:982px;top:75px;width:39px;height:18px;background:#fff"></div><div style="left:1009px;top:76px;width:11px;height:16px;background:#f0f0f0"></div><svg style="left:1012.0px;top:82.5px" width="5" height="3" viewBox="0 0 5 3"><path d="M0 0h5L2.5 3z" fill="#000"/></svg><div class="t" style="left:986px;top:77px;font-size:11px;line-height:14px">1</div>
<div style="left:28px;top:117px;width:1892px;height:1px;background:#fff"></div><div style="left:30px;top:100px;width:41px;height:18px;border-left:1px solid #fff;border-top:1px solid #fff;border-right:1px solid #696969;box-shadow:inset -1px 0 0 #a0a0a0;border-radius:2px 2px 0 0;"></div><div style="left:72px;top:100px;width:41px;height:18px;border-left:1px solid #fff;border-top:1px solid #fff;border-right:1px solid #696969;box-shadow:inset -1px 0 0 #a0a0a0;border-radius:2px 2px 0 0;"></div><div style="left:112px;top:98px;width:45px;height:20px;background:#f0f0f0;border-left:1px solid #fff;border-top:1px solid #fff;border-right:1px solid #696969;box-shadow:inset -1px 0 0 #a0a0a0;border-radius:2px 2px 0 0;"></div><div class="t" style="left:35px;top:103px;font-family:'DejaVu Sans','Liberation Sans',sans-serif;font-size:11px;line-height:14px">كد</div><div class="t" style="left:77px;top:103px;font-family:'DejaVu Sans','Liberation Sans',sans-serif;font-size:11px;line-height:14px">داده</div><div class="t" style="left:118px;top:100px;font-size:11.5px;line-height:14px">Page1</div>
<div style="left:2px;top:101px;width:23px;height:23px;border:1px solid #a0a0a0;border-right-color:#fff;border-bottom-color:#fff;background:#f8f8f8"></div><svg style="left:5px;top:104px" width="16" height="16" viewBox="0 0 16 16"><path d="M4 1v13l3.200-3 2.300 5 2-1-2.300-4.800h4.300z" fill="#000"/></svg><svg style="left:5px;top:127px" width="16" height="16" viewBox="0 0 16 16"><path d="M3.500 10.500c-3-2.500-2.500-4.500-.3-3l1.300 1-1.500-5c-.5-1.500 1.500-2 2-.5l-.3-1.500c-.3-1.500 1.700-2 2.100-.4l.2 .9c0-1.500 2-1.600 2.200 0l.3 1.500c.2-1.400 2-1.200 2.100 .3l.4 5.200c.2 3-1.500 5-4.500 5s-3-1.500-5-3.500z" fill="#fff" stroke="#3b4f86" stroke-width="1"/></svg><svg style="left:5px;top:150px" width="16" height="16" viewBox="0 0 16 16"><circle cx="6.500" cy="6.500" r="5" fill="#d6e8fb" stroke="#7c8794" stroke-width="1.500"/><path d="M10.500 10.500l4 4" stroke="#d9a443" stroke-width="2.600" stroke-linecap="round"/></svg><svg style="left:5px;top:173px" width="16" height="16" viewBox="0 0 16 16"><text x="0" y="13" font-family="Liberation Serif,serif" font-weight="bold" font-size="15" fill="#1f4e8c">T</text><path d="M12.500 8v7M11 8h3M11 15h3" stroke="#000" stroke-width="1" fill="none"/></svg><svg style="left:5px;top:196px" width="16" height="16" viewBox="0 0 16 16"><path d="M10 7l4.500-5.500" stroke="#6d62b5" stroke-width="3" stroke-linecap="round"/><path d="M1 9l7-4 4 4-6 6z" fill="#f3d774" stroke="#b99632" stroke-width=".8"/><path d="M8 5l4 4" stroke="#777" stroke-width="1.500"/></svg><svg style="left:5px;top:219px" width="16" height="16" viewBox="0 0 16 16"><rect x="0" y="6" width="5" height="4" fill="#b8d0f4" stroke="#5b79ad" stroke-width=".8"/><path d="M5 8h4" stroke="#000"/><path d="M7.500 6.500l2 1.500-2 1.500z" fill="#000"/><path d="M10.500 1.500h5v3.500h-5M10.500 11h5v3.500h-5" fill="none" stroke="#5b79ad" stroke-width="1"/></svg><svg style="left:5px;top:242px" width="16" height="16" viewBox="0 0 16 16"><text x="8" y="14.500" text-anchor="middle" font-family="Liberation Serif,serif" font-weight="bold" font-size="18" fill="#cc5a5f">A</text></svg><svg style="left:5px;top:265px" width="16" height="16" viewBox="0 0 16 16"><rect x=".5" y="1.500" width="15" height="13" fill="#fff" stroke="#666"/><rect x="2.500" y="3.500" width="11" height="9" fill="#bfe6c3"/><circle cx="8" cy="6.500" r="3" fill="#55b04f"/><rect x="7.300" y="8.500" width="1.400" height="2.500" fill="#a8742a"/><rect x="2.500" y="10.500" width="11" height="2" fill="#8fd08a"/></svg><svg style="left:5px;top:288px" width="16" height="16" viewBox="0 0 16 16"><rect x=".5" y=".5" width="10" height="11" fill="#eef3fc" stroke="#6a83b5"/><rect x="5.500" y="5.500" width="10" height="10" fill="#fff2a8" stroke="#6a83b5"/><path d="M7.500 9h6M7.500 11h6M7.500 13h6" stroke="#c8a030" stroke-width=".8"/></svg><svg style="left:5px;top:311px" width="16" height="16" viewBox="0 0 16 16"><text x="8" y="14" text-anchor="middle" font-family="Liberation Serif,serif" font-size="16" fill="#222">Σ</text></svg><svg style="left:5px;top:334px" width="16" height="16" viewBox="0 0 16 16"><rect x=".5" y="7.500" width="4.500" height="8" fill="#f5c33b" stroke="#b98d1f" stroke-width=".8"/><rect x="5.500" y="1.500" width="4.500" height="14" fill="#5b9be8" stroke="#2f66b5" stroke-width=".8"/><rect x="10.500" y="9.500" width="4.500" height="6" fill="#59b45a" stroke="#2f7d3a" stroke-width=".8"/></svg><svg style="left:5px;top:357px" width="16" height="16" viewBox="0 0 16 16"><rect x="1.500" y="1.500" width="13" height="13" fill="#fff" stroke="#6d7f9c"/><path d="M4 8l3 3 5-6.500" fill="none" stroke="#3765c0" stroke-width="1.800"/></svg><svg style="left:5px;top:380px" width="16" height="16" viewBox="0 0 16 16"><rect x="1.500" y="1" width="13" height="14" fill="#fff" stroke="#8a8a8a"/><text x="8" y="9.500" text-anchor="middle" font-family="Liberation Serif,serif" font-weight="bold" font-size="9" fill="#2a57b0">A</text><path d="M4 11.500h8M4 13.300h8" stroke="#777" stroke-width=".8"/></svg><svg style="left:5px;top:403px" width="16" height="16" viewBox="0 0 16 16"><path d="M2.500 .5h8l3 3v12h-11z" fill="#fff" stroke="#a9b7cf"/><rect x="5" y="11" width="9" height="3" fill="#e03030"/><path d="M2 11l2 1.500-2 1.500z" fill="#e03030"/></svg><svg style="left:5px;top:426px" width="16" height="16" viewBox="0 0 16 16"><rect x="0" y="4" width="6" height="5" fill="#b9b9b9" stroke="#7a7a7a" stroke-width=".8"/><circle cx="12" cy="3.500" r="2.700" fill="#8fd16f" stroke="#4e9a38" stroke-width=".8"/><path d="M8 6.500l5.500 9h-11z" fill="#fbe28a" stroke="#d2a12b" stroke-width=".9"/></svg><svg style="left:5px;top:449px" width="16" height="16" viewBox="0 0 16 16"><path d="M1.500 3v10M3.500 3v8M5.500 3v10M7.500 3v8M8.700 3v8M10.500 3v10M12.500 3v8M14.500 3v10" stroke="#333" stroke-width="1"/></svg>
<div style="left:29px;top:123px;width:196px;height:2px;border-top:1px solid #fff;border-bottom:1px solid #a0a0a0"></div><div style="left:29px;top:126px;width:196px;height:2px;border-top:1px solid #fff;border-bottom:1px solid #a0a0a0"></div><div style="left:225px;top:123px;width:1px;height:5px;background:#a0a0a0"></div><div style="left:227px;top:122px;width:10px;height:9px;border:1px solid #fff;border-right-color:#696969;border-bottom-color:#696969"></div><svg style="left:229px;top:123px" width="6" height="6" viewBox="0 0 6 6"><path d="M0 0l6 6M6 0l-6 6" stroke="#000" stroke-width="1"/></svg><div style="left:28px;top:132px;width:209px;height:889px;background:#fff;border-left:2px solid #828282;border-top:2px solid #828282;border-right:1px solid #e3e3e3;overflow:hidden"><div style="left:190px;top:0px;width:16px;height:887px;background:#f0f0f0"></div><div style="left:190px;top:42px;width:16px;height:698px;background:#cdcdcd"></div><svg style="left:194px;top:6px" width="9" height="6" viewBox="0 0 9 6"><path d="M.5 5l4-4 4 4" fill="none" stroke="#5a5a5a" stroke-width="1.900"/></svg><svg style="left:194px;top:874px" width="9" height="6" viewBox="0 0 9 6"><path d="M.5 1l4 4 4-4" fill="none" stroke="#5a5a5a" stroke-width="1.900"/></svg><div class="dotv" style="left:26px;top:16px;width:1px;height:880px;"></div><div class="dotv" style="left:7px;top:0px;width:1px;height:4px;"></div><div class="pm" style="left:3px;top:4px;width:9px;height:9px;"></div><div class="doth" style="left:13px;top:8px;width:6px;height:1px;"></div><svg style="left:20px;top:0px" width="14" height="16" viewBox="0 0 14 16"><rect x=".5" y=".5" width="13" height="15" rx="1" fill="url(#gb)" stroke="#7d8fb8"/></svg><div style="left:37px;top:0px;width:34px;height:16px;background:#f0f0f0"></div><div class="ti" style="left:38px;top:0px;letter-spacing:-.12px">Page1</div><div class="pm" style="left:22px;top:20px;width:9px;height:9px;"></div><div class="doth" style="left:32px;top:24px;width:5px;height:1px;"></div><svg style="left:38px;top:20px" width="15" height="9" viewBox="0 0 15 9"><rect x=".5" y=".5" width="14" height="8" fill="url(#gband)" stroke="#5a78b0"/></svg><div class="dotv" style="left:45px;top:30px;width:1px;height:123px;"></div><div class="ti" style="left:57px;top:16px;letter-spacing:-.12px">MasterPageHeader1</div><div class="doth" style="left:46px;top:40px;width:10px;height:1px;"></div><svg style="left:57px;top:34px" width="14" height="12" viewBox="0 0 14 12"><rect x=".5" y=".5" width="13" height="11" fill="url(#gshape)" stroke="#3f66a8"/></svg><div class="ti" style="left:76px;top:32px;letter-spacing:-.12px">Shape1</div><div class="doth" style="left:46px;top:56px;width:10px;height:1px;"></div><svg style="left:57px;top:48px" width="14" height="16" viewBox="0 0 14 16"><text x="7" y="14" text-anchor="middle" font-family="Liberation Serif,serif" font-weight="bold" font-size="16" fill="#cc5a5f">A</text></svg><div class="ti" style="left:76px;top:48px;letter-spacing:-.12px">SysMTitle</div><div class="doth" style="left:46px;top:72px;width:10px;height:1px;"></div><svg style="left:57px;top:64px" width="14" height="16" viewBox="0 0 14 16"><text x="7" y="14" text-anchor="middle" font-family="Liberation Serif,serif" font-weight="bold" font-size="16" fill="#cc5a5f">A</text></svg><div class="ti" style="left:76px;top:64px;letter-spacing:-.12px">SysMDate</div><div class="doth" style="left:46px;top:88px;width:10px;height:1px;"></div><svg style="left:57px;top:80px" width="14" height="16" viewBox="0 0 14 16"><text x="7" y="14" text-anchor="middle" font-family="Liberation Serif,serif" font-weight="bold" font-size="16" fill="#cc5a5f">A</text></svg><div class="ti" style="left:76px;top:80px;letter-spacing:-.12px">SysMPage</div><div class="doth" style="left:46px;top:104px;width:10px;height:1px;"></div><svg style="left:57px;top:96px" width="14" height="16" viewBox="0 0 14 16"><text x="7" y="14" text-anchor="middle" font-family="Liberation Serif,serif" font-weight="bold" font-size="16" fill="#cc5a5f">A</text></svg><div class="ti" style="left:76px;top:96px;letter-spacing:-.12px">SysMDomain</div><div class="doth" style="left:46px;top:120px;width:10px;height:1px;"></div><svg style="left:57px;top:112px" width="14" height="16" viewBox="0 0 14 16"><text x="7" y="14" text-anchor="middle" font-family="Liberation Serif,serif" font-weight="bold" font-size="16" fill="#cc5a5f">A</text></svg><div class="ti" style="left:76px;top:112px;letter-spacing:-.12px">SysMOrder</div><div class="doth" style="left:46px;top:136px;width:10px;height:1px;"></div><svg style="left:57px;top:128px" width="14" height="16" viewBox="0 0 14 16"><text x="7" y="14" text-anchor="middle" font-family="Liberation Serif,serif" font-weight="bold" font-size="16" fill="#cc5a5f">A</text></svg><div class="ti" style="left:76px;top:128px;letter-spacing:-.12px">SysMUserText</div><div class="doth" style="left:46px;top:152px;width:10px;height:1px;"></div><svg style="left:57px;top:144px" width="14" height="16" viewBox="0 0 14 16"><text x="7" y="14" text-anchor="middle" font-family="Liberation Serif,serif" font-weight="bold" font-size="16" fill="#cc5a5f">A</text></svg><div class="ti" style="left:76px;top:144px;letter-spacing:-.12px">SysMUserName</div><div class="doth" style="left:27px;top:168px;width:10px;height:1px;"></div><svg style="left:38px;top:164px" width="15" height="9" viewBox="0 0 15 9"><rect x=".5" y=".5" width="14" height="8" fill="url(#gband)" stroke="#5a78b0"/></svg><div class="ti" style="left:57px;top:160px;letter-spacing:-.12px">MasterData1</div><div class="pm" style="left:22px;top:180px;width:9px;height:9px;"></div><div class="doth" style="left:32px;top:184px;width:5px;height:1px;"></div><svg style="left:38px;top:180px" width="15" height="9" viewBox="0 0 15 9"><rect x=".5" y=".5" width="14" height="8" fill="url(#gband)" stroke="#5a78b0"/></svg><div class="dotv" style="left:45px;top:190px;width:1px;height:107px;"></div><div class="ti" style="left:57px;top:176px;letter-spacing:-.12px">DetailData1</div><div class="doth" style="left:46px;top:200px;width:10px;height:1px;"></div><svg style="left:57px;top:192px" width="14" height="16" viewBox="0 0 14 16"><text x="7" y="14" text-anchor="middle" font-family="Liberation Serif,serif" font-weight="bold" font-size="16" fill="#cc5a5f">A</text></svg><div class="ti" style="left:76px;top:192px;letter-spacing:-.12px">Memo1</div><div class="doth" style="left:46px;top:216px;width:10px;height:1px;"></div><svg style="left:57px;top:208px" width="14" height="16" viewBox="0 0 14 16"><text x="7" y="14" text-anchor="middle" font-family="Liberation Serif,serif" font-weight="bold" font-size="16" fill="#cc5a5f">A</text></svg><div class="ti" style="left:76px;top:208px;letter-spacing:-.12px">Memo2</div><div class="doth" style="left:46px;top:232px;width:10px;height:1px;"></div><svg style="left:57px;top:224px" width="14" height="16" viewBox="0 0 14 16"><text x="7" y="14" text-anchor="middle" font-family="Liberation Serif,serif" font-weight="bold" font-size="16" fill="#cc5a5f">A</text></svg><div class="ti" style="left:76px;top:224px;letter-spacing:-.12px">Memo3</div><div class="doth" style="left:46px;top:248px;width:10px;height:1px;"></div><svg style="left:57px;top:240px" width="14" height="16" viewBox="0 0 14 16"><text x="7" y="14" text-anchor="middle" font-family="Liberation Serif,serif" font-weight="bold" font-size="16" fill="#cc5a5f">A</text></svg><div class="ti" style="left:76px;top:240px;letter-spacing:-.12px">Memo4</div><div class="doth" style="left:46px;top:264px;width:10px;height:1px;"></div><svg style="left:57px;top:256px" width="14" height="16" viewBox="0 0 14 16"><text x="7" y="14" text-anchor="middle" font-family="Liberation Serif,serif" font-weight="bold" font-size="16" fill="#cc5a5f">A</text></svg><div class="ti" style="left:76px;top:256px;letter-spacing:-.12px">Memo5</div><div class="doth" style="left:46px;top:280px;width:10px;height:1px;"></div><svg style="left:57px;top:272px" width="14" height="16" viewBox="0 0 14 16"><text x="7" y="14" text-anchor="middle" font-family="Liberation Serif,serif" font-weight="bold" font-size="16" fill="#cc5a5f">A</text></svg><div class="ti" style="left:76px;top:272px;letter-spacing:-.12px">Memo25</div><div class="doth" style="left:46px;top:296px;width:10px;height:1px;"></div><svg style="left:57px;top:288px" width="14" height="16" viewBox="0 0 14 16"><text x="7" y="14" text-anchor="middle" font-family="Liberation Serif,serif" font-weight="bold" font-size="16" fill="#cc5a5f">A</text></svg><div class="ti" style="left:76px;top:288px;letter-spacing:-.12px">Memo26</div><div class="pm" style="left:22px;top:308px;width:9px;height:9px;"></div><div class="doth" style="left:32px;top:312px;width:5px;height:1px;"></div><svg style="left:38px;top:308px" width="15" height="9" viewBox="0 0 15 9"><rect x=".5" y=".5" width="14" height="8" fill="url(#gband)" stroke="#5a78b0"/></svg><div class="dotv" style="left:45px;top:318px;width:1px;height:107px;"></div><div class="ti" style="left:57px;top:304px;letter-spacing:-.12px">Child1</div><div class="doth" style="left:46px;top:328px;width:10px;height:1px;"></div><svg style="left:57px;top:320px" width="14" height="16" viewBox="0 0 14 16"><text x="7" y="14" text-anchor="middle" font-family="Liberation Serif,serif" font-weight="bold" font-size="16" fill="#cc5a5f">A</text></svg><div class="ti" style="left:76px;top:320px;letter-spacing:-.12px">Memo18</div><div class="doth" style="left:46px;top:344px;width:10px;height:1px;"></div><svg style="left:57px;top:336px" width="14" height="16" viewBox="0 0 14 16"><text x="7" y="14" text-anchor="middle" font-family="Liberation Serif,serif" font-weight="bold" font-size="16" fill="#cc5a5f">A</text></svg><div class="ti" style="left:76px;top:336px;letter-spacing:-.12px">Memo19</div><div class="doth" style="left:46px;top:360px;width:10px;height:1px;"></div><svg style="left:57px;top:352px" width="14" height="16" viewBox="0 0 14 16"><text x="7" y="14" text-anchor="middle" font-family="Liberation Serif,serif" font-weight="bold" font-size="16" fill="#cc5a5f">A</text></svg><div class="ti" style="left:76px;top:352px;letter-spacing:-.12px">Memo20</div><div class="doth" style="left:46px;top:376px;width:10px;height:1px;"></div><svg style="left:57px;top:368px" width="14" height="16" viewBox="0 0 14 16"><text x="7" y="14" text-anchor="middle" font-family="Liberation Serif,serif" font-weight="bold" font-size="16" fill="#cc5a5f">A</text></svg><div class="ti" style="left:76px;top:368px;letter-spacing:-.12px">Memo21</div><div class="doth" style="left:46px;top:392px;width:10px;height:1px;"></div><svg style="left:57px;top:384px" width="14" height="16" viewBox="0 0 14 16"><text x="7" y="14" text-anchor="middle" font-family="Liberation Serif,serif" font-weight="bold" font-size="16" fill="#cc5a5f">A</text></svg><div class="ti" style="left:76px;top:384px;letter-spacing:-.12px">Memo22</div><div class="doth" style="left:46px;top:408px;width:10px;height:1px;"></div><svg style="left:57px;top:400px" width="14" height="16" viewBox="0 0 14 16"><text x="7" y="14" text-anchor="middle" font-family="Liberation Serif,serif" font-weight="bold" font-size="16" fill="#cc5a5f">A</text></svg><div class="ti" style="left:76px;top:400px;letter-spacing:-.12px">Memo23</div><div class="doth" style="left:46px;top:424px;width:10px;height:1px;"></div><svg style="left:57px;top:416px" width="14" height="16" viewBox="0 0 14 16"><text x="7" y="14" text-anchor="middle" font-family="Liberation Serif,serif" font-weight="bold" font-size="16" fill="#cc5a5f">A</text></svg><div class="ti" style="left:76px;top:416px;letter-spacing:-.12px">Memo24</div><div class="doth" style="left:27px;top:440px;width:10px;height:1px;"></div><svg style="left:38px;top:436px" width="15" height="9" viewBox="0 0 15 9"><rect x=".5" y=".5" width="14" height="8" fill="url(#gband)" stroke="#5a78b0"/></svg><div class="ti" style="left:57px;top:432px;letter-spacing:-.12px">GroupHeader1</div><div class="pm" style="left:22px;top:452px;width:9px;height:9px;"></div><div class="doth" style="left:32px;top:456px;width:5px;height:1px;"></div><svg style="left:38px;top:452px" width="15" height="9" viewBox="0 0 15 9"><rect x=".5" y=".5" width="14" height="8" fill="url(#gband)" stroke="#5a78b0"/></svg><div class="dotv" style="left:45px;top:462px;width:1px;height:27px;"></div><div class="ti" style="left:57px;top:448px;letter-spacing:-.12px">GroupFooter1</div><div class="doth" style="left:46px;top:472px;width:10px;height:1px;"></div><svg style="left:57px;top:464px" width="14" height="16" viewBox="0 0 14 16"><text x="7" y="14" text-anchor="middle" font-family="Liberation Serif,serif" font-weight="bold" font-size="16" fill="#cc5a5f">A</text></svg><div class="ti" style="left:76px;top:464px;letter-spacing:-.12px">Memo27</div><div class="doth" style="left:46px;top:488px;width:10px;height:1px;"></div><svg style="left:57px;top:480px" width="14" height="16" viewBox="0 0 14 16"><text x="7" y="14" text-anchor="middle" font-family="Liberation Serif,serif" font-weight="bold" font-size="16" fill="#cc5a5f">A</text></svg><div class="ti" style="left:76px;top:480px;letter-spacing:-.12px">Memo28</div><div class="pm" style="left:22px;top:500px;width:9px;height:9px;"></div><div class="doth" style="left:32px;top:504px;width:5px;height:1px;"></div><svg style="left:38px;top:500px" width="15" height="9" viewBox="0 0 15 9"><rect x=".5" y=".5" width="14" height="8" fill="url(#gband)" stroke="#5a78b0"/></svg><div class="dotv" style="left:45px;top:510px;width:1px;height:75px;"></div><div class="ti" style="left:57px;top:496px;letter-spacing:-.12px">PageFooter1</div><div class="doth" style="left:46px;top:520px;width:10px;height:1px;"></div><svg style="left:57px;top:512px" width="14" height="16" viewBox="0 0 14 16"><text x="7" y="14" text-anchor="middle" font-family="Liberation Serif,serif" font-weight="bold" font-size="16" fill="#cc5a5f">A</text></svg><div class="ti" style="left:76px;top:512px;letter-spacing:-.12px">Memo45</div><div class="doth" style="left:46px;top:536px;width:10px;height:1px;"></div><svg style="left:57px;top:528px" width="14" height="16" viewBox="0 0 14 16"><text x="7" y="14" text-anchor="middle" font-family="Liberation Serif,serif" font-weight="bold" font-size="16" fill="#cc5a5f">A</text></svg><div class="ti" style="left:76px;top:528px;letter-spacing:-.12px">Memo35</div><div class="doth" style="left:46px;top:552px;width:10px;height:1px;"></div><svg style="left:57px;top:544px" width="14" height="16" viewBox="0 0 14 16"><text x="7" y="14" text-anchor="middle" font-family="Liberation Serif,serif" font-weight="bold" font-size="16" fill="#cc5a5f">A</text></svg><div class="ti" style="left:76px;top:544px;letter-spacing:-.12px">Memo38</div><div class="doth" style="left:46px;top:568px;width:10px;height:1px;"></div><svg style="left:57px;top:560px" width="14" height="16" viewBox="0 0 14 16"><text x="7" y="14" text-anchor="middle" font-family="Liberation Serif,serif" font-weight="bold" font-size="16" fill="#cc5a5f">A</text></svg><div class="ti" style="left:76px;top:560px;letter-spacing:-.12px">Memo43</div><div class="doth" style="left:46px;top:584px;width:10px;height:1px;"></div><svg style="left:57px;top:576px" width="14" height="16" viewBox="0 0 14 16"><text x="7" y="14" text-anchor="middle" font-family="Liberation Serif,serif" font-weight="bold" font-size="16" fill="#cc5a5f">A</text></svg><div class="ti" style="left:76px;top:576px;letter-spacing:-.12px">Memo44</div><div class="pm" style="left:22px;top:596px;width:9px;height:9px;"></div><div class="doth" style="left:32px;top:600px;width:5px;height:1px;"></div><svg style="left:38px;top:596px" width="15" height="9" viewBox="0 0 15 9"><rect x=".5" y=".5" width="14" height="8" fill="url(#gband)" stroke="#5a78b0"/></svg><div class="dotv" style="left:45px;top:606px;width:1px;height:27px;"></div><div class="ti" style="left:57px;top:592px;letter-spacing:-.12px">Child2</div><div class="doth" style="left:46px;top:616px;width:10px;height:1px;"></div><svg style="left:57px;top:608px" width="14" height="16" viewBox="0 0 14 16"><text x="7" y="14" text-anchor="middle" font-family="Liberation Serif,serif" font-weight="bold" font-size="16" fill="#cc5a5f">A</text></svg><div class="ti" style="left:76px;top:608px;letter-spacing:-.12px">Memo34</div><div class="doth" style="left:46px;top:632px;width:10px;height:1px;"></div><svg style="left:57px;top:624px" width="14" height="16" viewBox="0 0 14 16"><text x="7" y="14" text-anchor="middle" font-family="Liberation Serif,serif" font-weight="bold" font-size="16" fill="#cc5a5f">A</text></svg><div class="ti" style="left:76px;top:624px;letter-spacing:-.12px">Memo37</div><div class="pm" style="left:22px;top:644px;width:9px;height:9px;"></div><div class="doth" style="left:32px;top:648px;width:5px;height:1px;"></div><svg style="left:38px;top:644px" width="15" height="9" viewBox="0 0 15 9"><rect x=".5" y=".5" width="14" height="8" fill="url(#gband)" stroke="#5a78b0"/></svg><div class="dotv" style="left:45px;top:654px;width:1px;height:27px;"></div><div class="ti" style="left:57px;top:640px;letter-spacing:-.12px">Child3</div><div class="doth" style="left:46px;top:664px;width:10px;height:1px;"></div><svg style="left:57px;top:656px" width="14" height="16" viewBox="0 0 14 16"><text x="7" y="14" text-anchor="middle" font-family="Liberation Serif,serif" font-weight="bold" font-size="16" fill="#cc5a5f">A</text></svg><div class="ti" style="left:76px;top:656px;letter-spacing:-.12px">Memo29</div><div class="doth" style="left:46px;top:680px;width:10px;height:1px;"></div><svg style="left:57px;top:672px" width="14" height="16" viewBox="0 0 14 16"><text x="7" y="14" text-anchor="middle" font-family="Liberation Serif,serif" font-weight="bold" font-size="16" fill="#cc5a5f">A</text></svg><div class="ti" style="left:76px;top:672px;letter-spacing:-.12px">Memo30</div><div class="pm" style="left:22px;top:692px;width:9px;height:9px;"></div><div class="doth" style="left:32px;top:696px;width:5px;height:1px;"></div><svg style="left:38px;top:692px" width="15" height="9" viewBox="0 0 15 9"><rect x=".5" y=".5" width="14" height="8" fill="url(#gband)" stroke="#5a78b0"/></svg><div class="dotv" style="left:45px;top:702px;width:1px;height:27px;"></div><div class="ti" style="left:57px;top:688px;letter-spacing:-.12px">Child4</div><div class="doth" style="left:46px;top:712px;width:10px;height:1px;"></div><svg style="left:57px;top:704px" width="14" height="16" viewBox="0 0 14 16"><text x="7" y="14" text-anchor="middle" font-family="Liberation Serif,serif" font-weight="bold" font-size="16" fill="#cc5a5f">A</text></svg><div class="ti" style="left:76px;top:704px;letter-spacing:-.12px">Memo31</div><div class="doth" style="left:46px;top:728px;width:10px;height:1px;"></div><svg style="left:57px;top:720px" width="14" height="16" viewBox="0 0 14 16"><text x="7" y="14" text-anchor="middle" font-family="Liberation Serif,serif" font-weight="bold" font-size="16" fill="#cc5a5f">A</text></svg><div class="ti" style="left:76px;top:720px;letter-spacing:-.12px">Memo32</div><div class="pm" style="left:22px;top:740px;width:9px;height:9px;"></div><div class="doth" style="left:32px;top:744px;width:5px;height:1px;"></div><svg style="left:38px;top:740px" width="15" height="9" viewBox="0 0 15 9"><rect x=".5" y=".5" width="14" height="8" fill="url(#gband)" stroke="#5a78b0"/></svg><div class="dotv" style="left:45px;top:750px;width:1px;height:27px;"></div><div class="ti" style="left:57px;top:736px;letter-spacing:-.12px">Child5</div><div class="doth" style="left:46px;top:760px;width:10px;height:1px;"></div><svg style="left:57px;top:752px" width="14" height="16" viewBox="0 0 14 16"><text x="7" y="14" text-anchor="middle" font-family="Liberation Serif,serif" font-weight="bold" font-size="16" fill="#cc5a5f">A</text></svg><div class="ti" style="left:76px;top:752px;letter-spacing:-.12px">Memo41</div><div class="doth" style="left:46px;top:776px;width:10px;height:1px;"></div><svg style="left:57px;top:768px" width="14" height="16" viewBox="0 0 14 16"><text x="7" y="14" text-anchor="middle" font-family="Liberation Serif,serif" font-weight="bold" font-size="16" fill="#cc5a5f">A</text></svg><div class="ti" style="left:76px;top:768px;letter-spacing:-.12px">Memo42</div><div class="pm" style="left:22px;top:788px;width:9px;height:9px;"></div><div class="doth" style="left:32px;top:792px;width:5px;height:1px;"></div><svg style="left:38px;top:788px" width="15" height="9" viewBox="0 0 15 9"><rect x=".5" y=".5" width="14" height="8" fill="url(#gband)" stroke="#5a78b0"/></svg><div class="dotv" style="left:45px;top:798px;width:1px;height:91px;"></div><div class="ti" style="left:57px;top:784px;letter-spacing:-.12px">Child6</div><div class="doth" style="left:46px;top:808px;width:10px;height:1px;"></div><svg style="left:57px;top:802px" width="14" height="12" viewBox="0 0 14 12"><rect x=".5" y=".5" width="13" height="11" fill="url(#gshape)" stroke="#3f66a8"/></svg><div class="ti" style="left:76px;top:800px;letter-spacing:-.12px">Shape2</div><div class="doth" style="left:46px;top:824px;width:10px;height:1px;"></div><svg style="left:57px;top:816px" width="14" height="16" viewBox="0 0 14 16"><text x="7" y="14" text-anchor="middle" font-family="Liberation Serif,serif" font-weight="bold" font-size="16" fill="#cc5a5f">A</text></svg><div class="ti" style="left:76px;top:816px;letter-spacing:-.12px">Memo6</div><div class="doth" style="left:46px;top:840px;width:10px;height:1px;"></div><svg style="left:57px;top:832px" width="14" height="16" viewBox="0 0 14 16"><text x="7" y="14" text-anchor="middle" font-family="Liberation Serif,serif" font-weight="bold" font-size="16" fill="#cc5a5f">A</text></svg><div class="ti" style="left:76px;top:832px;letter-spacing:-.12px">Memo7</div><div class="doth" style="left:46px;top:856px;width:10px;height:1px;"></div><svg style="left:57px;top:848px" width="14" height="16" viewBox="0 0 14 16"><text x="7" y="14" text-anchor="middle" font-family="Liberation Serif,serif" font-weight="bold" font-size="16" fill="#cc5a5f">A</text></svg><div class="ti" style="left:76px;top:848px;letter-spacing:-.12px">Memo8</div><div class="doth" style="left:46px;top:872px;width:10px;height:1px;"></div><svg style="left:57px;top:864px" width="14" height="16" viewBox="0 0 14 16"><text x="7" y="14" text-anchor="middle" font-family="Liberation Serif,serif" font-weight="bold" font-size="16" fill="#cc5a5f">A</text></svg><div class="ti" style="left:76px;top:864px;letter-spacing:-.12px">Memo9</div><div class="doth" style="left:46px;top:888px;width:10px;height:1px;"></div><svg style="left:57px;top:880px" width="14" height="16" viewBox="0 0 14 16"><text x="7" y="14" text-anchor="middle" font-family="Liberation Serif,serif" font-weight="bold" font-size="16" fill="#cc5a5f">A</text></svg><div class="ti" style="left:76px;top:880px;letter-spacing:-.12px">Memo10</div></div><div style="left:238px;top:556px;width:5px;height:28px;background:#d9d9c9"></div><div class="dotv" style="left:240px;top:560px;width:1px;height:20px;"></div>
<div style="left:1625px;top:124px;width:282px;height:2px;border-top:1px solid #fff;border-bottom:1px solid #a0a0a0"></div><div style="left:1625px;top:127px;width:282px;height:2px;border-top:1px solid #fff;border-bottom:1px solid #a0a0a0"></div><div style="left:1906px;top:124px;width:1px;height:5px;background:#a0a0a0"></div><div style="left:1909px;top:121px;width:10px;height:10px;border:1px solid #fff;border-right-color:#696969;border-bottom-color:#696969"></div><svg style="left:1911px;top:123px" width="6" height="6" viewBox="0 0 6 6"><path d="M0 0l6 6M6 0l-6 6" stroke="#000" stroke-width="1"/></svg><div style="left:1624px;top:133px;width:44px;height:20px;border-left:1px solid #fff;border-top:1px solid #fff;border-right:1px solid #696969;box-shadow:inset -1px 0 0 #a0a0a0;border-radius:2px 2px 0 0"></div><div style="left:1669px;top:135px;width:45px;height:17px;border-left:1px solid #fff;border-top:1px solid #fff;border-right:1px solid #696969;box-shadow:inset -1px 0 0 #a0a0a0;border-radius:2px 2px 0 0"></div><div style="left:1716px;top:135px;width:41px;height:17px;border-left:1px solid #fff;border-top:1px solid #fff;border-right:1px solid #696969;box-shadow:inset -1px 0 0 #a0a0a0;border-radius:2px 2px 0 0"></div><div style="left:1758px;top:135px;width:43px;height:17px;border-left:1px solid #fff;border-top:1px solid #fff;border-right:1px solid #696969;box-shadow:inset -1px 0 0 #a0a0a0;border-radius:2px 2px 0 0"></div><div class="t" style="left:1631px;top:136px;font-family:'DejaVu Sans','Liberation Sans',sans-serif;font-size:11px;line-height:14px">داده</div><div class="t" style="left:1674px;top:138px;font-family:'DejaVu Sans','Liberation Sans',sans-serif;font-size:11px;line-height:14px">متغيرها</div><div class="t" style="left:1721px;top:138px;font-family:'DejaVu Sans','Liberation Sans',sans-serif;font-size:11px;line-height:14px">توابع</div><div class="t" style="left:1763px;top:138px;font-family:'DejaVu Sans','Liberation Sans',sans-serif;font-size:11px;line-height:14px">كلاسها</div><div style="left:1623px;top:152px;width:296px;height:814px;background:#fff;border-left:2px solid #828282;border-top:2px solid #828282;border-right:1px solid #e3e3e3;overflow:hidden"><div style="left:277px;top:0px;width:16px;height:811px;background:#f0f0f0"></div><div style="left:277px;top:17px;width:16px;height:165px;background:#cdcdcd"></div><svg style="left:281px;top:6px" width="9" height="6" viewBox="0 0 9 6"><path d="M.5 5l4-4 4 4" fill="none" stroke="#5a5a5a" stroke-width="1.900"/></svg><svg style="left:281px;top:800px" width="9" height="6" viewBox="0 0 9 6"><path d="M.5 1l4 4 4-4" fill="none" stroke="#5a5a5a" stroke-width="1.900"/></svg><div class="dotv" style="left:8px;top:16px;width:1px;height:800px;"></div><svg style="left:2px;top:0px" width="13" height="15" viewBox="0 0 13 15"><path d="M.7 3.500v8c0 1.700 2.600 2.800 5.800 2.800s5.800-1.100 5.800-2.800v-8z" fill="url(#gy)" stroke="#e8a21c" stroke-width="1"/><ellipse cx="6.500" cy="3.500" rx="5.800" ry="2.800" fill="#fff3c4" stroke="#f0b030" stroke-width="1"/></svg><div class="ti" style="left:21px;top:1px;font-family:'DejaVu Sans','Liberation Sans',sans-serif;font-weight:bold">داده</div><div class="pm" style="left:4px;top:20px;width:9px;height:9px;"></div><div class="doth" style="left:14px;top:24px;width:6px;height:1px;"></div><svg style="left:21px;top:16px" width="13" height="15" viewBox="0 0 13 15"><path d="M.7 3.500v8c0 1.700 2.600 2.800 5.800 2.800s5.800-1.100 5.800-2.800v-8z" fill="url(#gy)" stroke="#e8a21c" stroke-width="1"/><ellipse cx="6.500" cy="3.500" rx="5.800" ry="2.800" fill="#fff3c4" stroke="#f0b030" stroke-width="1"/></svg><div class="ti" style="left:39px;top:17px;font-family:'DejaVu Sans','Liberation Sans',sans-serif;font-weight:bold">ارز</div><div class="dotv" style="left:27px;top:32px;width:1px;height:57px;"></div><div class="doth" style="left:28px;top:40px;width:11px;height:1px;"></div><svg style="left:39px;top:34px" width="13" height="12" viewBox="0 0 13 12"><rect x=".5" y=".5" width="12" height="11" fill="#fff" stroke="#7f9ed4"/><text x="6.500" y="9.500" text-anchor="middle" font-family="Liberation Sans,sans-serif" font-weight="bold" font-size="9" letter-spacing="-.5" fill="#222">.0</text></svg><div class="ti" style="left:59px;top:33px;font-family:'DejaVu Sans','Liberation Sans',sans-serif">شماره يكتا</div><div class="doth" style="left:28px;top:56px;width:11px;height:1px;"></div><svg style="left:39px;top:50px" width="13" height="12" viewBox="0 0 13 12"><rect x=".5" y=".5" width="12" height="11" fill="#fff" stroke="#7f9ed4"/><text x="6.500" y="10" text-anchor="middle" font-family="Liberation Serif,serif" font-weight="bold" font-size="11" fill="#111">A</text></svg><div class="ti" style="left:59px;top:49px;font-family:'DejaVu Sans','Liberation Sans',sans-serif">نام ارز</div><div class="doth" style="left:28px;top:72px;width:11px;height:1px;"></div><svg style="left:39px;top:66px" width="13" height="12" viewBox="0 0 13 12"><rect x=".5" y=".5" width="12" height="11" fill="#fff" stroke="#7f9ed4"/><text x="6.500" y="10" text-anchor="middle" font-family="Liberation Serif,serif" font-weight="bold" font-size="11" fill="#111">A</text></svg><div class="ti" style="left:59px;top:65px;font-family:'DejaVu Sans','Liberation Sans',sans-serif">نام خلاصه ارز</div><div class="doth" style="left:28px;top:88px;width:11px;height:1px;"></div><svg style="left:39px;top:82px" width="13" height="12" viewBox="0 0 13 12"><rect x=".5" y=".5" width="12" height="11" fill="#fff" stroke="#7f9ed4"/><text x="6.500" y="9.500" text-anchor="middle" font-family="Liberation Sans,sans-serif" font-weight="bold" font-size="9" letter-spacing="-.5" fill="#222">.0</text></svg><div class="ti" style="left:59px;top:81px;font-family:'DejaVu Sans','Liberation Sans',sans-serif">GuId</div><div class="pm" style="left:4px;top:100px;width:9px;height:9px;"></div><div class="doth" style="left:14px;top:104px;width:6px;height:1px;"></div><svg style="left:21px;top:96px" width="13" height="15" viewBox="0 0 13 15"><path d="M.7 3.500v8c0 1.700 2.600 2.800 5.800 2.800s5.800-1.100 5.800-2.800v-8z" fill="url(#gy)" stroke="#e8a21c" stroke-width="1"/><ellipse cx="6.500" cy="3.500" rx="5.800" ry="2.800" fill="#fff3c4" stroke="#f0b030" stroke-width="1"/></svg><div class="ti" style="left:39px;top:97px;font-family:'DejaVu Sans','Liberation Sans',sans-serif;font-weight:bold">انبار</div><div class="dotv" style="left:27px;top:112px;width:1px;height:57px;"></div><div class="doth" style="left:28px;top:120px;width:11px;height:1px;"></div><svg style="left:39px;top:114px" width="13" height="12" viewBox="0 0 13 12"><rect x=".5" y=".5" width="12" height="11" fill="#fff" stroke="#7f9ed4"/><text x="6.500" y="9.500" text-anchor="middle" font-family="Liberation Sans,sans-serif" font-weight="bold" font-size="9" letter-spacing="-.5" fill="#222">.0</text></svg><div class="ti" style="left:59px;top:113px;font-family:'DejaVu Sans','Liberation Sans',sans-serif">شماره يكتا</div><div class="doth" style="left:28px;top:136px;width:11px;height:1px;"></div><svg style="left:39px;top:130px" width="13" height="12" viewBox="0 0 13 12"><rect x=".5" y=".5" width="12" height="11" fill="#fff" stroke="#7f9ed4"/><text x="6.500" y="10" text-anchor="middle" font-family="Liberation Serif,serif" font-weight="bold" font-size="11" fill="#111">A</text></svg><div class="ti" style="left:59px;top:129px;font-family:'DejaVu Sans','Liberation Sans',sans-serif">شماره انبار</div><div class="doth" style="left:28px;top:152px;width:11px;height:1px;"></div><svg style="left:39px;top:146px" width="13" height="12" viewBox="0 0 13 12"><rect x=".5" y=".5" width="12" height="11" fill="#fff" stroke="#7f9ed4"/><text x="6.500" y="10" text-anchor="middle" font-family="Liberation Serif,serif" font-weight="bold" font-size="11" fill="#111">A</text></svg><div class="ti" style="left:59px;top:145px;font-family:'DejaVu Sans','Liberation Sans',sans-serif">نام انبار</div><div class="doth" style="left:28px;top:168px;width:11px;height:1px;"></div><svg style="left:39px;top:162px" width="13" height="12" viewBox="0 0 13 12"><rect x=".5" y=".5" width="12" height="11" fill="#fff" stroke="#7f9ed4"/><text x="6.500" y="9.500" text-anchor="middle" font-family="Liberation Sans,sans-serif" font-weight="bold" font-size="9" letter-spacing="-.5" fill="#222">.0</text></svg><div class="ti" style="left:59px;top:161px;font-family:'DejaVu Sans','Liberation Sans',sans-serif">GuId</div><div class="pm" style="left:4px;top:180px;width:9px;height:9px;"></div><div class="doth" style="left:14px;top:184px;width:6px;height:1px;"></div><svg style="left:21px;top:176px" width="13" height="15" viewBox="0 0 13 15"><path d="M.7 3.500v8c0 1.700 2.600 2.800 5.800 2.800s5.800-1.100 5.800-2.800v-8z" fill="url(#gy)" stroke="#e8a21c" stroke-width="1"/><ellipse cx="6.500" cy="3.500" rx="5.800" ry="2.800" fill="#fff3c4" stroke="#f0b030" stroke-width="1"/></svg><div class="ti" style="left:39px;top:177px;font-family:'DejaVu Sans','Liberation Sans',sans-serif;font-weight:bold">تفصيلي شناور</div><div class="dotv" style="left:27px;top:192px;width:1px;height:553px;"></div><div class="doth" style="left:28px;top:200px;width:11px;height:1px;"></div><svg style="left:39px;top:194px" width="13" height="12" viewBox="0 0 13 12"><rect x=".5" y=".5" width="12" height="11" fill="#fff" stroke="#7f9ed4"/><text x="6.500" y="9.500" text-anchor="middle" font-family="Liberation Sans,sans-serif" font-weight="bold" font-size="9" letter-spacing="-.5" fill="#222">.0</text></svg><div class="ti" style="left:59px;top:193px;font-family:'DejaVu Sans','Liberation Sans',sans-serif">شماره يكتا</div><div class="doth" style="left:28px;top:216px;width:11px;height:1px;"></div><svg style="left:39px;top:210px" width="13" height="12" viewBox="0 0 13 12"><rect x=".5" y=".5" width="12" height="11" fill="#fff" stroke="#7f9ed4"/><text x="6.500" y="10" text-anchor="middle" font-family="Liberation Serif,serif" font-weight="bold" font-size="11" fill="#111">A</text></svg><div class="ti" style="left:59px;top:209px;font-family:'DejaVu Sans','Liberation Sans',sans-serif">كد تفصيلى شناور</div><div class="doth" style="left:28px;top:232px;width:11px;height:1px;"></div><svg style="left:39px;top:226px" width="13" height="12" viewBox="0 0 13 12"><rect x=".5" y=".5" width="12" height="11" fill="#fff" stroke="#7f9ed4"/><text x="6.500" y="10" text-anchor="middle" font-family="Liberation Serif,serif" font-weight="bold" font-size="11" fill="#111">A</text></svg><div class="ti" style="left:59px;top:225px;font-family:'DejaVu Sans','Liberation Sans',sans-serif">نام تفصيلى شناور</div><div class="doth" style="left:28px;top:248px;width:11px;height:1px;"></div><svg style="left:39px;top:242px" width="13" height="12" viewBox="0 0 13 12"><rect x=".5" y=".5" width="12" height="11" fill="#fff" stroke="#7f9ed4"/><text x="6.500" y="9.500" text-anchor="middle" font-family="Liberation Sans,sans-serif" font-weight="bold" font-size="9" letter-spacing="-.5" fill="#222">.0</text></svg><div class="ti" style="left:59px;top:241px;font-family:'DejaVu Sans','Liberation Sans',sans-serif">سقف بستانكاري</div><div class="doth" style="left:28px;top:264px;width:11px;height:1px;"></div><svg style="left:39px;top:258px" width="13" height="12" viewBox="0 0 13 12"><rect x=".5" y=".5" width="12" height="11" fill="#fff" stroke="#7f9ed4"/><text x="6.500" y="9.500" text-anchor="middle" font-family="Liberation Sans,sans-serif" font-weight="bold" font-size="9" letter-spacing="-.5" fill="#222">.0</text></svg><div class="ti" style="left:59px;top:257px;font-family:'DejaVu Sans','Liberation Sans',sans-serif">سقف بدهكاري</div><div class="doth" style="left:28px;top:280px;width:11px;height:1px;"></div><svg style="left:39px;top:274px" width="13" height="12" viewBox="0 0 13 12"><rect x=".5" y=".5" width="12" height="11" fill="#fff" stroke="#7f9ed4"/><text x="6.500" y="9.500" text-anchor="middle" font-family="Liberation Sans,sans-serif" font-weight="bold" font-size="9" letter-spacing="-.5" fill="#222">.0</text></svg><div class="ti" style="left:59px;top:273px;font-family:'DejaVu Sans','Liberation Sans',sans-serif">سقف بستانكاري با اسناد</div><div class="doth" style="left:28px;top:296px;width:11px;height:1px;"></div><svg style="left:39px;top:290px" width="13" height="12" viewBox="0 0 13 12"><rect x=".5" y=".5" width="12" height="11" fill="#fff" stroke="#7f9ed4"/><text x="6.500" y="9.500" text-anchor="middle" font-family="Liberation Sans,sans-serif" font-weight="bold" font-size="9" letter-spacing="-.5" fill="#222">.0</text></svg><div class="ti" style="left:59px;top:289px;font-family:'DejaVu Sans','Liberation Sans',sans-serif">سقف بدهكاري با اسناد</div><div class="doth" style="left:28px;top:312px;width:11px;height:1px;"></div><svg style="left:39px;top:306px" width="13" height="12" viewBox="0 0 13 12"><rect x=".5" y=".5" width="12" height="11" fill="#fff" stroke="#7f9ed4"/><text x="6.500" y="9.500" text-anchor="middle" font-family="Liberation Sans,sans-serif" font-weight="bold" font-size="9" letter-spacing="-.5" fill="#222">.0</text></svg><div class="ti" style="left:59px;top:305px;font-family:'DejaVu Sans','Liberation Sans',sans-serif">مانده حساب</div><div class="doth" style="left:28px;top:328px;width:11px;height:1px;"></div><svg style="left:39px;top:322px" width="13" height="12" viewBox="0 0 13 12"><rect x=".5" y=".5" width="12" height="11" fill="#fff" stroke="#7f9ed4"/><text x="6.500" y="10" text-anchor="middle" font-family="Liberation Serif,serif" font-weight="bold" font-size="11" fill="#111">A</text></svg><div class="ti" style="left:59px;top:321px;font-family:'DejaVu Sans','Liberation Sans',sans-serif">توضيحات حساب</div><div class="doth" style="left:28px;top:344px;width:11px;height:1px;"></div><svg style="left:39px;top:338px" width="13" height="12" viewBox="0 0 13 12"><rect x="0" y="0" width="13" height="12" fill="#e9effa"/><rect x="0" y="0" width="13" height="2.500" fill="#3f6fcf"/><path d="M3.200 2.500v9.500M6.500 2.500v9.500M9.800 2.500v9.500M0 5.500h13M0 8.500h13" stroke="#8fa9dc" stroke-width="1"/><rect x="4" y="6" width="2.500" height="2.500" fill="#e04040"/></svg><div class="ti" style="left:59px;top:337px;font-family:'DejaVu Sans','Liberation Sans',sans-serif">تاريخ ايجاد</div><div class="doth" style="left:28px;top:360px;width:11px;height:1px;"></div><svg style="left:39px;top:354px" width="13" height="12" viewBox="0 0 13 12"><rect x="0" y="0" width="13" height="12" fill="#e9effa"/><rect x="0" y="0" width="13" height="2.500" fill="#3f6fcf"/><path d="M3.200 2.500v9.500M6.500 2.500v9.500M9.800 2.500v9.500M0 5.500h13M0 8.500h13" stroke="#8fa9dc" stroke-width="1"/><rect x="4" y="6" width="2.500" height="2.500" fill="#e04040"/></svg><div class="ti" style="left:59px;top:353px;font-family:'DejaVu Sans','Liberation Sans',sans-serif">تاريخ آخرين تغيير</div><div class="doth" style="left:28px;top:376px;width:11px;height:1px;"></div><svg style="left:39px;top:370px" width="13" height="12" viewBox="0 0 13 12"><rect x=".5" y=".5" width="12" height="11" fill="#fff" stroke="#7f9ed4"/><text x="6.500" y="10" text-anchor="middle" font-family="Liberation Serif,serif" font-weight="bold" font-size="11" fill="#111">A</text></svg><div class="ti" style="left:59px;top:369px;font-family:'DejaVu Sans','Liberation Sans',sans-serif">تلفن ۱</div><div class="doth" style="left:28px;top:392px;width:11px;height:1px;"></div><svg style="left:39px;top:386px" width="13" height="12" viewBox="0 0 13 12"><rect x=".5" y=".5" width="12" height="11" fill="#fff" stroke="#7f9ed4"/><text x="6.500" y="10" text-anchor="middle" font-family="Liberation Serif,serif" font-weight="bold" font-size="11" fill="#111">A</text></svg><div class="ti" style="left:59px;top:385px;font-family:'DejaVu Sans','Liberation Sans',sans-serif">تلفن ۲</div><div class="doth" style="left:28px;top:408px;width:11px;height:1px;"></div><svg style="left:39px;top:402px" width="13" height="12" viewBox="0 0 13 12"><rect x=".5" y=".5" width="12" height="11" fill="#fff" stroke="#7f9ed4"/><text x="6.500" y="10" text-anchor="middle" font-family="Liberation Serif,serif" font-weight="bold" font-size="11" fill="#111">A</text></svg><div class="ti" style="left:59px;top:401px;font-family:'DejaVu Sans','Liberation Sans',sans-serif">فكس</div><div class="doth" style="left:28px;top:424px;width:11px;height:1px;"></div><svg style="left:39px;top:418px" width="13" height="12" viewBox="0 0 13 12"><rect x=".5" y=".5" width="12" height="11" fill="#fff" stroke="#7f9ed4"/><text x="6.500" y="10" text-anchor="middle" font-family="Liberation Serif,serif" font-weight="bold" font-size="11" fill="#111">A</text></svg><div class="ti" style="left:59px;top:417px;font-family:'DejaVu Sans','Liberation Sans',sans-serif">ايميل</div><div class="doth" style="left:28px;top:440px;width:11px;height:1px;"></div><svg style="left:39px;top:434px" width="13" height="12" viewBox="0 0 13 12"><rect x=".5" y=".5" width="12" height="11" fill="#fff" stroke="#7f9ed4"/><text x="6.500" y="10" text-anchor="middle" font-family="Liberation Serif,serif" font-weight="bold" font-size="11" fill="#111">A</text></svg><div class="ti" style="left:59px;top:433px;font-family:'DejaVu Sans','Liberation Sans',sans-serif">Web</div><div class="doth" style="left:28px;top:456px;width:11px;height:1px;"></div><svg style="left:39px;top:450px" width="13" height="12" viewBox="0 0 13 12"><rect x=".5" y=".5" width="12" height="11" fill="#fff" stroke="#7f9ed4"/><text x="6.500" y="10" text-anchor="middle" font-family="Liberation Serif,serif" font-weight="bold" font-size="11" fill="#111">A</text></svg><div class="ti" style="left:59px;top:449px;font-family:'DejaVu Sans','Liberation Sans',sans-serif">آدرس۱</div><div class="doth" style="left:28px;top:472px;width:11px;height:1px;"></div><svg style="left:39px;top:466px" width="13" height="12" viewBox="0 0 13 12"><rect x=".5" y=".5" width="12" height="11" fill="#fff" stroke="#7f9ed4"/><text x="6.500" y="10" text-anchor="middle" font-family="Liberation Serif,serif" font-weight="bold" font-size="11" fill="#111">A</text></svg><div class="ti" style="left:59px;top:465px;font-family:'DejaVu Sans','Liberation Sans',sans-serif">آدرس۲</div><div class="doth" style="left:28px;top:488px;width:11px;height:1px;"></div><svg style="left:39px;top:482px" width="13" height="12" viewBox="0 0 13 12"><rect x=".5" y=".5" width="12" height="11" fill="#fff" stroke="#7f9ed4"/><text x="6.500" y="10" text-anchor="middle" font-family="Liberation Serif,serif" font-weight="bold" font-size="11" fill="#111">A</text></svg><div class="ti" style="left:59px;top:481px;font-family:'DejaVu Sans','Liberation Sans',sans-serif">شهر</div><div class="doth" style="left:28px;top:504px;width:11px;height:1px;"></div><svg style="left:39px;top:498px" width="13" height="12" viewBox="0 0 13 12"><rect x=".5" y=".5" width="12" height="11" fill="#fff" stroke="#7f9ed4"/><text x="6.500" y="10" text-anchor="middle" font-family="Liberation Serif,serif" font-weight="bold" font-size="11" fill="#111">A</text></svg><div class="ti" style="left:59px;top:497px;font-family:'DejaVu Sans','Liberation Sans',sans-serif">استان</div><div class="doth" style="left:28px;top:520px;width:11px;height:1px;"></div><svg style="left:39px;top:514px" width="13" height="12" viewBox="0 0 13 12"><rect x=".5" y=".5" width="12" height="11" fill="#fff" stroke="#7f9ed4"/><text x="6.500" y="10" text-anchor="middle" font-family="Liberation Serif,serif" font-weight="bold" font-size="11" fill="#111">A</text></svg><div class="ti" style="left:59px;top:513px;font-family:'DejaVu Sans','Liberation Sans',sans-serif">كد پستى</div><div class="doth" style="left:28px;top:536px;width:11px;height:1px;"></div><svg style="left:39px;top:530px" width="13" height="12" viewBox="0 0 13 12"><rect x=".5" y=".5" width="12" height="11" fill="#fff" stroke="#7f9ed4"/><text x="6.500" y="10" text-anchor="middle" font-family="Liberation Serif,serif" font-weight="bold" font-size="11" fill="#111">A</text></svg><div class="ti" style="left:59px;top:529px;font-family:'DejaVu Sans','Liberation Sans',sans-serif">كشور</div><div class="doth" style="left:28px;top:552px;width:11px;height:1px;"></div><svg style="left:39px;top:546px" width="13" height="12" viewBox="0 0 13 12"><rect x=".5" y=".5" width="12" height="11" fill="#fff" stroke="#7f9ed4"/><text x="6.500" y="10" text-anchor="middle" font-family="Liberation Serif,serif" font-weight="bold" font-size="11" fill="#111">A</text></svg><div class="ti" style="left:59px;top:545px;font-family:'DejaVu Sans','Liberation Sans',sans-serif">كد اقتصادي</div><div class="doth" style="left:28px;top:568px;width:11px;height:1px;"></div><svg style="left:39px;top:562px" width="13" height="12" viewBox="0 0 13 12"><rect x=".5" y=".5" width="12" height="11" fill="#fff" stroke="#7f9ed4"/><text x="6.500" y="10" text-anchor="middle" font-family="Liberation Serif,serif" font-weight="bold" font-size="11" fill="#111">A</text></svg><div class="ti" style="left:59px;top:561px;font-family:'DejaVu Sans','Liberation Sans',sans-serif">تلكس</div><div class="doth" style="left:28px;top:584px;width:11px;height:1px;"></div><svg style="left:39px;top:578px" width="13" height="12" viewBox="0 0 13 12"><rect x=".5" y=".5" width="12" height="11" fill="#fff" stroke="#7f9ed4"/><text x="6.500" y="10" text-anchor="middle" font-family="Liberation Serif,serif" font-weight="bold" font-size="11" fill="#111">A</text></svg><div class="ti" style="left:59px;top:577px;font-family:'DejaVu Sans','Liberation Sans',sans-serif">عنوان</div><div class="doth" style="left:28px;top:600px;width:11px;height:1px;"></div><svg style="left:39px;top:594px" width="13" height="12" viewBox="0 0 13 12"><rect x=".5" y=".5" width="12" height="11" fill="#fff" stroke="#7f9ed4"/><text x="6.500" y="10" text-anchor="middle" font-family="Liberation Serif,serif" font-weight="bold" font-size="11" fill="#111">A</text></svg><div class="ti" style="left:59px;top:593px;font-family:'DejaVu Sans','Liberation Sans',sans-serif">موبايل</div><div class="doth" style="left:28px;top:616px;width:11px;height:1px;"></div><svg style="left:39px;top:610px" width="13" height="12" viewBox="0 0 13 12"><rect x=".5" y=".5" width="12" height="11" fill="#fff" stroke="#7f9ed4"/><text x="6.500" y="10" text-anchor="middle" font-family="Liberation Serif,serif" font-weight="bold" font-size="11" fill="#111">A</text></svg><div class="ti" style="left:59px;top:609px;font-family:'DejaVu Sans','Liberation Sans',sans-serif">شماره حساب بانكى ۱</div><div class="doth" style="left:28px;top:632px;width:11px;height:1px;"></div><svg style="left:39px;top:626px" width="13" height="12" viewBox="0 0 13 12"><rect x=".5" y=".5" width="12" height="11" fill="#fff" stroke="#7f9ed4"/><text x="6.500" y="10" text-anchor="middle" font-family="Liberation Serif,serif" font-weight="bold" font-size="11" fill="#111">A</text></svg><div class="ti" style="left:59px;top:625px;font-family:'DejaVu Sans','Liberation Sans',sans-serif">شماره حساب بانكى ۲</div><div class="doth" style="left:28px;top:648px;width:11px;height:1px;"></div><svg style="left:39px;top:642px" width="13" height="12" viewBox="0 0 13 12"><rect x=".5" y=".5" width="12" height="11" fill="#fff" stroke="#7f9ed4"/><text x="6.500" y="9.500" text-anchor="middle" font-family="Liberation Sans,sans-serif" font-weight="bold" font-size="9" letter-spacing="-.5" fill="#222">.0</text></svg><div class="ti" style="left:59px;top:641px;font-family:'DejaVu Sans','Liberation Sans',sans-serif">درصد تخفيف پيش فرض</div><div class="doth" style="left:28px;top:664px;width:11px;height:1px;"></div><svg style="left:39px;top:658px" width="13" height="12" viewBox="0 0 13 12"><rect x="0" y="0" width="13" height="12" fill="#e9effa"/><rect x="0" y="0" width="13" height="2.500" fill="#3f6fcf"/><path d="M3.200 2.500v9.500M6.500 2.500v9.500M9.800 2.500v9.500M0 5.500h13M0 8.500h13" stroke="#8fa9dc" stroke-width="1"/><rect x="4" y="6" width="2.500" height="2.500" fill="#e04040"/></svg><div class="ti" style="left:59px;top:657px;font-family:'DejaVu Sans','Liberation Sans',sans-serif">تاريخ تولد</div><div class="doth" style="left:28px;top:680px;width:11px;height:1px;"></div><svg style="left:39px;top:674px" width="13" height="12" viewBox="0 0 13 12"><rect x=".5" y=".5" width="12" height="11" fill="#fff" stroke="#7f9ed4"/><text x="6.500" y="10" text-anchor="middle" font-family="Liberation Serif,serif" font-weight="bold" font-size="11" fill="#111">A</text></svg><div class="ti" style="left:59px;top:673px;font-family:'DejaVu Sans','Liberation Sans',sans-serif">كد شهر</div><div class="doth" style="left:28px;top:696px;width:11px;height:1px;"></div><svg style="left:39px;top:690px" width="13" height="12" viewBox="0 0 13 12"><rect x=".5" y=".5" width="12" height="11" fill="#fff" stroke="#7f9ed4"/><text x="6.500" y="9.500" text-anchor="middle" font-family="Liberation Sans,sans-serif" font-weight="bold" font-size="9" letter-spacing="-.5" fill="#222">.0</text></svg><div class="ti" style="left:59px;top:689px;font-family:'DejaVu Sans','Liberation Sans',sans-serif">نوع حساب(حقوقى-حقيقى)</div><div class="doth" style="left:28px;top:712px;width:11px;height:1px;"></div><svg style="left:39px;top:706px" width="13" height="12" viewBox="0 0 13 12"><rect x=".5" y=".5" width="12" height="11" fill="#fff" stroke="#7f9ed4"/><text x="6.500" y="9.500" text-anchor="middle" font-family="Liberation Sans,sans-serif" font-weight="bold" font-size="9" letter-spacing="-.5" fill="#222">.0</text></svg><div class="ti" style="left:59px;top:705px;font-family:'DejaVu Sans','Liberation Sans',sans-serif">نوع خريدار/ فروشنده در دارايى</div><div class="doth" style="left:28px;top:728px;width:11px;height:1px;"></div><svg style="left:39px;top:722px" width="13" height="12" viewBox="0 0 13 12"><rect x=".5" y=".5" width="12" height="11" fill="#fff" stroke="#7f9ed4"/><text x="6.500" y="10" text-anchor="middle" font-family="Liberation Serif,serif" font-weight="bold" font-size="11" fill="#111">A</text></svg><div class="ti" style="left:59px;top:721px;font-family:'DejaVu Sans','Liberation Sans',sans-serif">كد ملى</div><div class="doth" style="left:28px;top:744px;width:11px;height:1px;"></div><svg style="left:39px;top:738px" width="13" height="12" viewBox="0 0 13 12"><rect x=".5" y=".5" width="12" height="11" fill="#fff" stroke="#7f9ed4"/><text x="6.500" y="9.500" text-anchor="middle" font-family="Liberation Sans,sans-serif" font-weight="bold" font-size="9" letter-spacing="-.5" fill="#222">.0</text></svg><div class="ti" style="left:59px;top:737px;font-family:'DejaVu Sans','Liberation Sans',sans-serif">GuId</div><div class="pm" style="left:4px;top:756px;width:9px;height:9px;"></div><div class="doth" style="left:14px;top:760px;width:6px;height:1px;"></div><svg style="left:21px;top:752px" width="13" height="15" viewBox="0 0 13 15"><path d="M.7 3.500v8c0 1.700 2.600 2.800 5.800 2.800s5.800-1.100 5.800-2.800v-8z" fill="url(#gy)" stroke="#e8a21c" stroke-width="1"/><ellipse cx="6.500" cy="3.500" rx="5.800" ry="2.800" fill="#fff3c4" stroke="#f0b030" stroke-width="1"/></svg><div class="ti" style="left:39px;top:753px;font-family:'DejaVu Sans','Liberation Sans',sans-serif;font-weight:bold">رديف فاكتور</div><div class="dotv" style="left:27px;top:768px;width:1px;height:41px;"></div><div class="doth" style="left:28px;top:776px;width:11px;height:1px;"></div><svg style="left:39px;top:770px" width="13" height="12" viewBox="0 0 13 12"><rect x=".5" y=".5" width="12" height="11" fill="#fff" stroke="#7f9ed4"/><text x="6.500" y="9.500" text-anchor="middle" font-family="Liberation Sans,sans-serif" font-weight="bold" font-size="9" letter-spacing="-.5" fill="#222">.0</text></svg><div class="ti" style="left:59px;top:769px;font-family:'DejaVu Sans','Liberation Sans',sans-serif">شماره يكتا</div><div class="doth" style="left:28px;top:792px;width:11px;height:1px;"></div><svg style="left:39px;top:786px" width="13" height="12" viewBox="0 0 13 12"><rect x=".5" y=".5" width="12" height="11" fill="#fff" stroke="#7f9ed4"/><text x="6.500" y="9.500" text-anchor="middle" font-family="Liberation Sans,sans-serif" font-weight="bold" font-size="9" letter-spacing="-.5" fill="#222">.0</text></svg><div class="ti" style="left:59px;top:785px;font-family:'DejaVu Sans','Liberation Sans',sans-serif">مقدار۱</div><div class="doth" style="left:28px;top:808px;width:11px;height:1px;"></div><svg style="left:39px;top:802px" width="13" height="12" viewBox="0 0 13 12"><rect x=".5" y=".5" width="12" height="11" fill="#fff" stroke="#7f9ed4"/><text x="6.500" y="9.500" text-anchor="middle" font-family="Liberation Sans,sans-serif" font-weight="bold" font-size="9" letter-spacing="-.5" fill="#222">.0</text></svg><div class="ti" style="left:59px;top:801px;font-family:'DejaVu Sans','Liberation Sans',sans-serif">مقدار۲</div></div><div style="left:1623px;top:974px;width:13px;height:13px;border:1px solid;border-color:#a0a0a0 #fff #fff #a0a0a0;box-shadow:inset 1px 1px 0 #696969,inset -1px -1px 0 #e3e3e3;background:#fff"><svg style="left:2px;top:1px" width="9" height="9" viewBox="0 0 9 9"><path d="M1 4.500l2.500 2.500 4.500-5.500" fill="none" stroke="#000" stroke-width="1.600"/></svg></div><div class="t" style="left:1640px;top:973px;font-family:'DejaVu Sans','Liberation Sans',sans-serif;font-size:11px;line-height:15px">ايجاد فيلد</div><div style="left:1623px;top:990px;width:13px;height:13px;border:1px solid;border-color:#a0a0a0 #fff #fff #a0a0a0;box-shadow:inset 1px 1px 0 #696969,inset -1px -1px 0 #e3e3e3;background:#fff"></div><div class="t" style="left:1640px;top:989px;font-family:'DejaVu Sans','Liberation Sans',sans-serif;font-size:11px;line-height:15px">ايجاد عنوان</div><div style="left:1623px;top:1006px;width:13px;height:13px;border:1px solid;border-color:#a0a0a0 #fff #fff #a0a0a0;box-shadow:inset 1px 1px 0 #696969,inset -1px -1px 0 #e3e3e3;background:#fff"></div><div class="t" style="left:1640px;top:1005px;font-family:'Liberation Sans','DejaVu Sans',sans-serif;font-size:11px;line-height:15px">Sort by Name</div><div style="left:1616px;top:554px;width:5px;height:28px;background:#d9d9c9"></div><div class="dotv" style="left:1618px;top:558px;width:1px;height:20px;"></div>
<div style="left:0px;top:1021px;width:1920px;height:19px;background:#f0f0f0"></div><div style="left:0px;top:1040px;width:1920px;height:1px;background:#1a1a1a"></div><div style="left:0px;top:1023px;width:75px;height:17px;border-top:1px solid #a0a0a0;border-left:1px solid #a0a0a0;border-right:1px solid #fff;border-bottom:1px solid #fff"></div><div style="left:77px;top:1023px;width:227px;height:17px;border-top:1px solid #a0a0a0;border-left:1px solid #a0a0a0;border-right:1px solid #fff;border-bottom:1px solid #fff"></div><div style="left:306px;top:1023px;width:1596px;height:17px;border-top:1px solid #a0a0a0;border-left:1px solid #a0a0a0;border-right:1px solid #fff;border-bottom:1px solid #fff"></div><div class="t" style="left:3px;top:1026px;font-family:'DejaVu Sans','Liberation Sans',sans-serif;font-size:11.3px;line-height:13px">سانتي متر</div><div style="left:87px;top:1028px;width:7px;height:7px;background:#b5d0f5;border:1px solid #7a9fd6"></div><div style="left:83px;top:1025px;width:1px;height:8px;background:#666"></div><div style="left:81px;top:1027px;width:8px;height:1px;background:#999"></div><div class="t" style="left:98px;top:1026px;font-size:11px;line-height:13px">19/96; 4/14</div><div class="t" style="left:309px;top:1026px;font-size:11px;line-height:13px">Page1</div>
</body></html>
